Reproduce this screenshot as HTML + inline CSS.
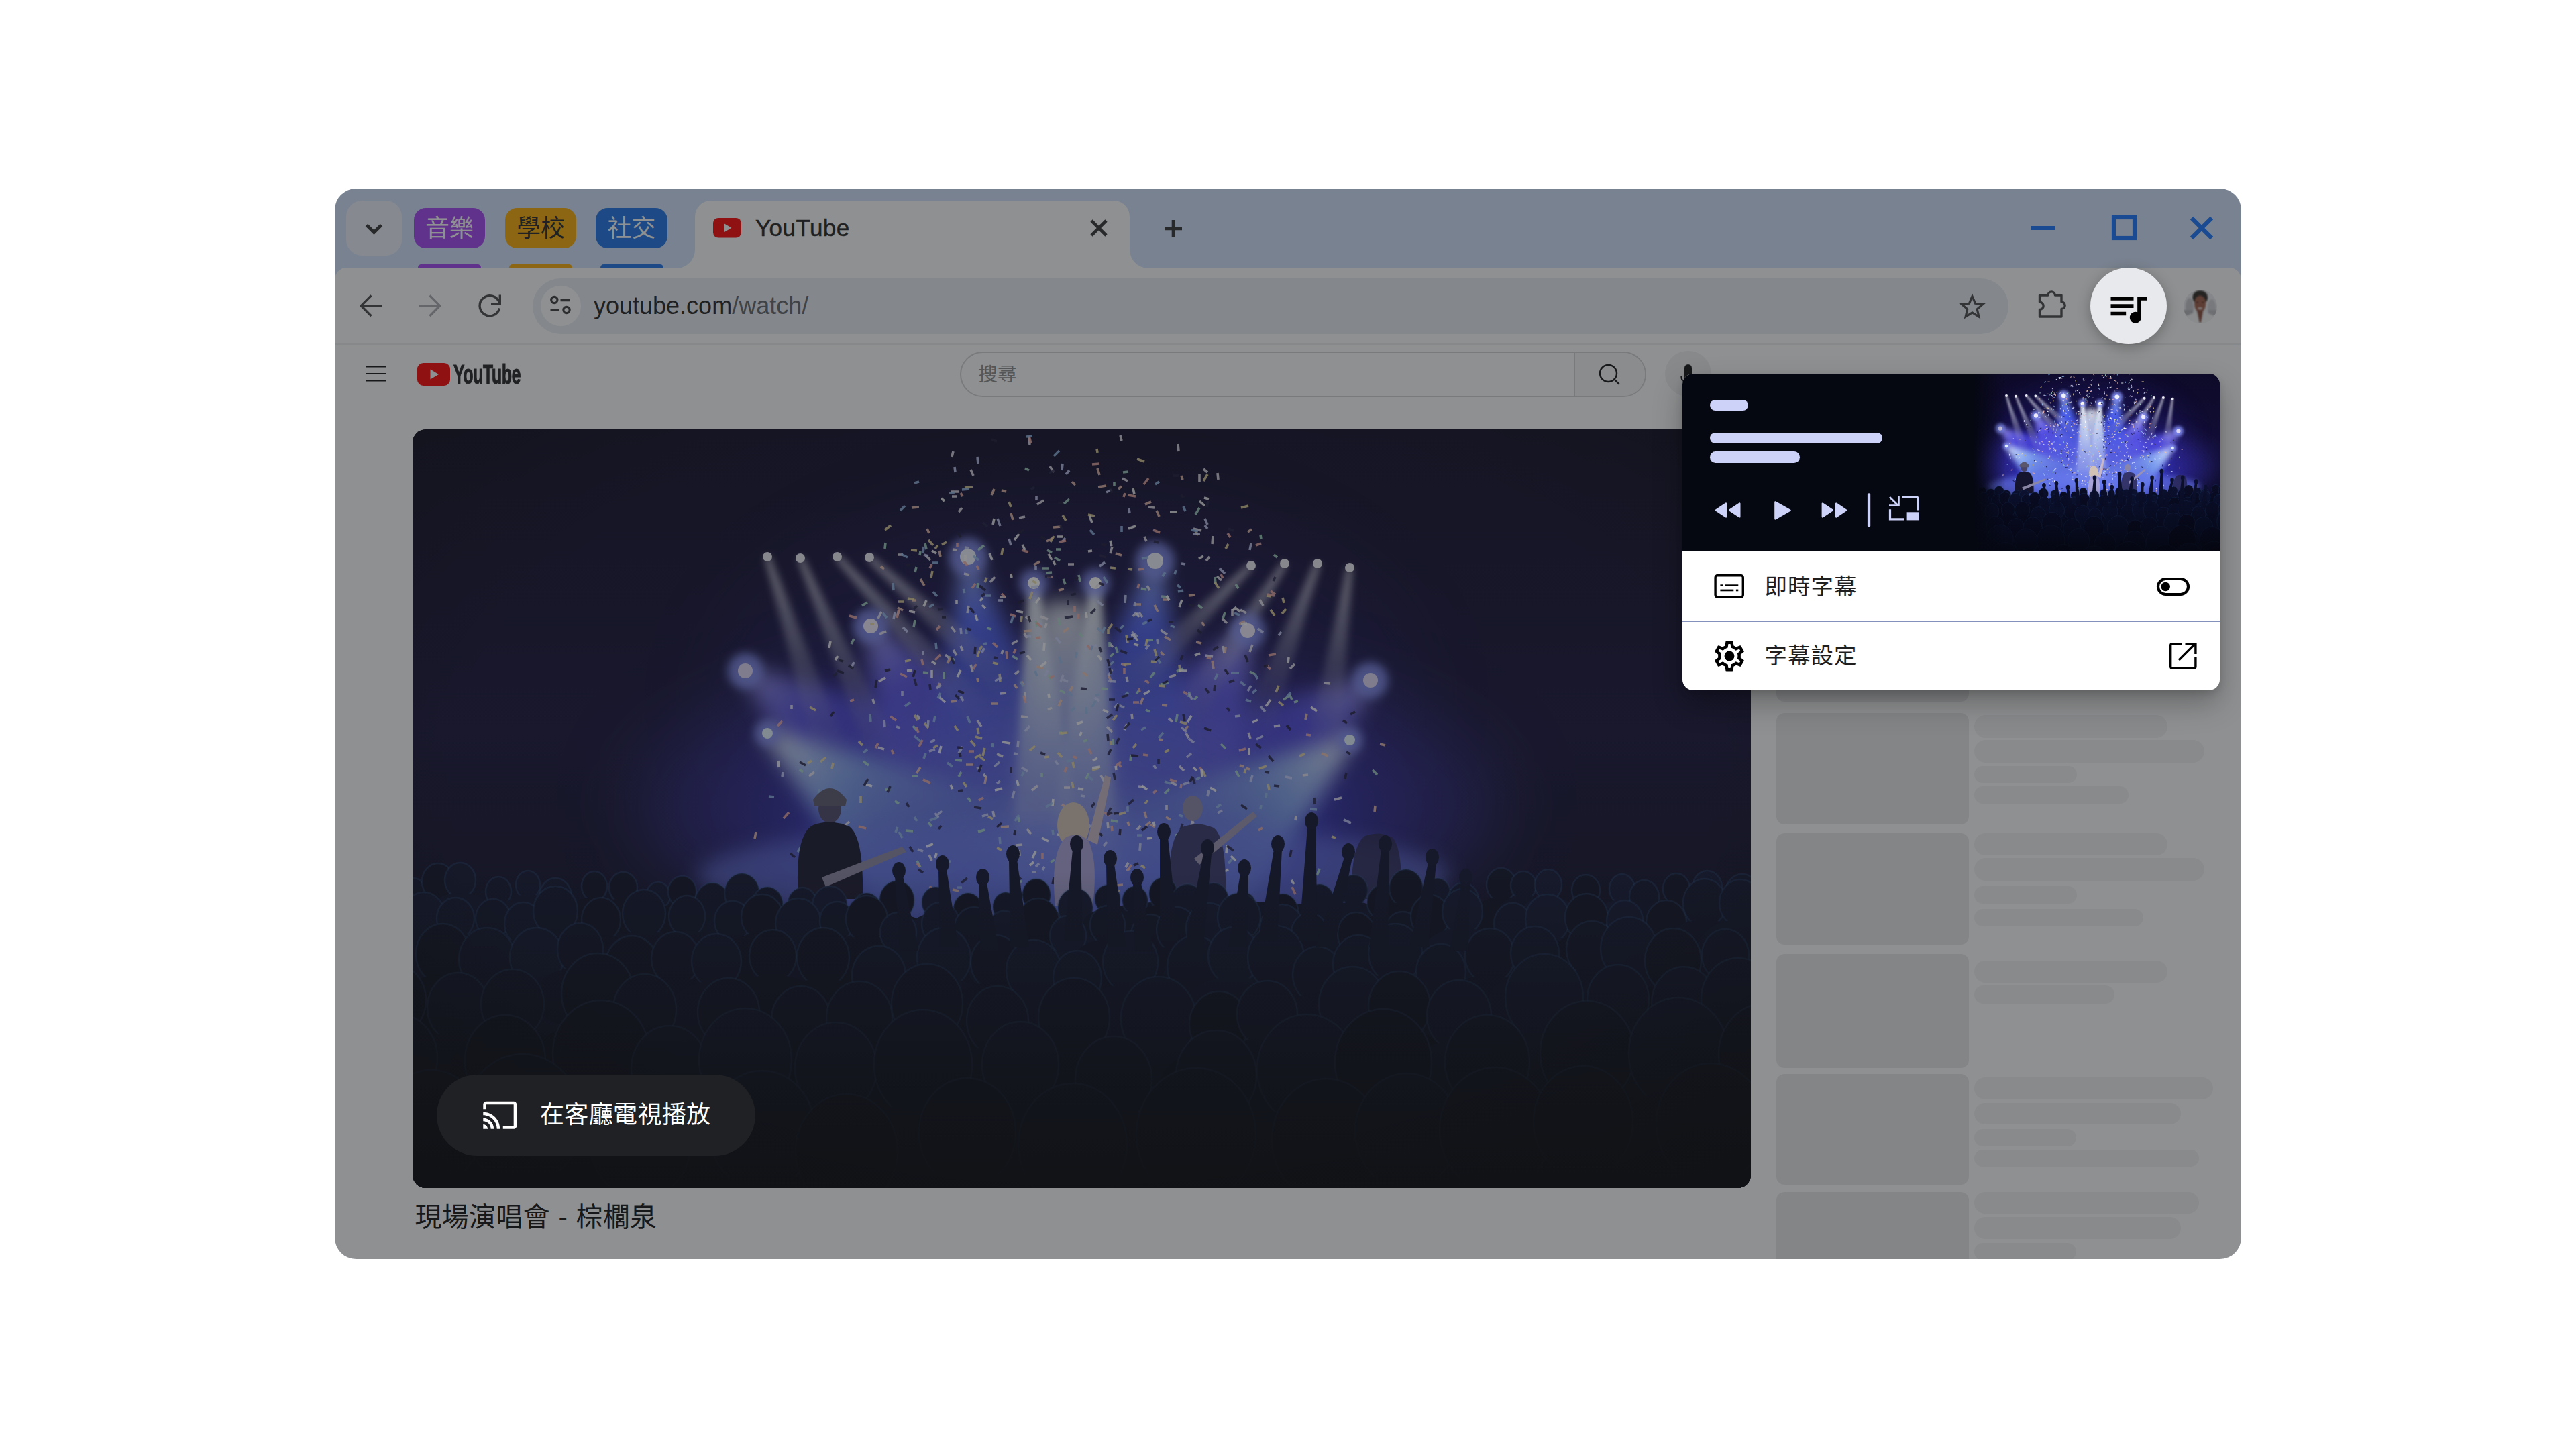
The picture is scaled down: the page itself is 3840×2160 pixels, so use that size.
<!DOCTYPE html><html lang="zh-Hant"><head><meta charset="utf-8"><title>YouTube</title><style>
*{box-sizing:border-box;margin:0;padding:0}
html,body{width:3840px;height:2160px;background:#fff;overflow:hidden}
body{position:relative;font-family:"Liberation Sans","Noto Sans CJK TC",sans-serif;color:#1f1f1f}
.abs{position:absolute}
#win{position:absolute;left:0;top:0;width:3840px;height:2160px;clip-path:inset(281px 499px 283px 499px round 32px);background:#d3e3fd}
#top{position:absolute;left:0;top:0;width:3840px;height:2160px;clip-path:inset(281px 499px 283px 499px round 32px)}
.chip{position:absolute;top:310px;height:60px;border-radius:18px;font-size:36px;line-height:62px;text-align:center;color:#fff;letter-spacing:0}
.uline{position:absolute;top:394.3px;height:14px;border-radius:5px}
#toolbar{position:absolute;left:499px;top:399px;width:2842px;height:114px;background:#fff;border-radius:18px 18px 0 0}
#tsep{position:absolute;left:499px;top:512px;width:2842px;height:2px;background:#eceef1}
#page{position:absolute;left:499px;top:515px;width:2842px;height:1362px;background:#fff}
#omni{position:absolute;left:794px;top:414.5px;width:2200px;height:83px;border-radius:42px;background:#e9eef6}
.sk{position:absolute;background:#e9e9ea;border-radius:12px}
.sl{position:absolute;background:#f2f2f3;border-radius:17px;left:2943px}
#scrim{position:absolute;left:499px;top:281px;width:2842px;height:1596px;background:rgba(32,33,36,.5)}
#video{position:absolute;left:615px;top:640px;width:1995px;height:1131px;border-radius:20px;overflow:hidden;background:#0d0a26}
#pop{position:absolute;left:2508px;top:557px;width:801px;height:472px;border-radius:16px;background:#fff;box-shadow:0 20px 44px rgba(0,0,0,.27),0 5px 12px rgba(0,0,0,.12)}
#popin{position:absolute;left:0;top:0;width:801px;height:472px;border-radius:16px;overflow:hidden}
#dark{position:absolute;left:0;top:0;width:801px;height:265px;background:#050711}
.pill{position:absolute;background:#cdd2f8;border-radius:9px}
.row{position:absolute;left:122.5px;letter-spacing:1px;font-size:33.5px;color:#1f1f1f;line-height:40px;white-space:nowrap}
#mbtn{position:absolute;left:3116px;top:399px;width:114px;height:114px;border-radius:57px;background:#e8e9ed;box-shadow:0 5px 20px rgba(0,0,0,.28)}
#cast{position:absolute;left:651px;top:1602px;width:475px;height:121px;border-radius:61px;background:#202125}
</style></head><body>
<svg width="0" height="0" style="position:absolute"><symbol id="concert" viewBox="0 0 1995 1131" preserveAspectRatio="none">
<defs>
<linearGradient id="cbg" x1="0" y1="0" x2="0" y2="1"><stop offset="0" stop-color="#0c0926"/><stop offset=".4" stop-color="#120e36"/><stop offset=".65" stop-color="#0c0c26"/><stop offset="1" stop-color="#020307"/></linearGradient>
<radialGradient id="cglow" cx="975" cy="590" r="1" gradientUnits="userSpaceOnUse" gradientTransform="translate(975 590) scale(640 330) translate(-975 -590)"><stop offset="0" stop-color="#6c7ef2" stop-opacity=".95"/><stop offset=".3" stop-color="#3c4ce8" stop-opacity=".88"/><stop offset=".6" stop-color="#3030c2" stop-opacity=".62"/><stop offset=".82" stop-color="#251c86" stop-opacity=".28"/><stop offset="1" stop-color="#140f50" stop-opacity="0"/></radialGradient>
<linearGradient id="bw" x1="0" y1="0" x2="0" y2="1"><stop offset="0" stop-color="#e4e4f0" stop-opacity=".8"/><stop offset=".6" stop-color="#b8b8d8" stop-opacity=".3"/><stop offset="1" stop-color="#9090c0" stop-opacity="0"/></linearGradient>
<linearGradient id="bb" x1="0" y1="0" x2="0" y2="1"><stop offset="0" stop-color="#9ab4ff"/><stop offset=".25" stop-color="#4a62ff" stop-opacity=".9"/><stop offset=".6" stop-color="#3342ea" stop-opacity=".6"/><stop offset="1" stop-color="#3038d0" stop-opacity="0"/></linearGradient>
<linearGradient id="bp" x1="0" y1="0" x2="0" y2="1"><stop offset="0" stop-color="#aaa6ff"/><stop offset=".25" stop-color="#5650f4" stop-opacity=".9"/><stop offset=".6" stop-color="#3f38dc" stop-opacity=".6"/><stop offset="1" stop-color="#3230c4" stop-opacity="0"/></linearGradient>
<linearGradient id="bc" x1="0" y1="0" x2="0" y2="1"><stop offset="0" stop-color="#eaf6ff"/><stop offset=".3" stop-color="#8cbcf8" stop-opacity=".85"/><stop offset=".65" stop-color="#5a80e6" stop-opacity=".5"/><stop offset="1" stop-color="#4868d8" stop-opacity="0"/></linearGradient>
<linearGradient id="bwc" x1="0" y1="0" x2="0" y2="1"><stop offset="0" stop-color="#f6fbff"/><stop offset=".35" stop-color="#d4e4f6" stop-opacity=".85"/><stop offset=".7" stop-color="#a8b8ee" stop-opacity=".45"/><stop offset="1" stop-color="#98a8f0" stop-opacity="0"/></linearGradient>
<linearGradient id="crowdfade" x1="0" y1="0" x2="0" y2="1"><stop offset="0" stop-color="#03040a" stop-opacity="0"/><stop offset=".3" stop-color="#03040a" stop-opacity=".3"/><stop offset=".65" stop-color="#03040a" stop-opacity=".7"/><stop offset="1" stop-color="#020308" stop-opacity=".94"/></linearGradient>
<radialGradient id="vig" cx=".5" cy=".45" r=".78"><stop offset=".6" stop-color="#000" stop-opacity="0"/><stop offset="1" stop-color="#000" stop-opacity=".5"/></radialGradient>
<filter id="bl8" x="-30%" y="-10%" width="160%" height="120%"><feGaussianBlur stdDeviation="6"/></filter>
<filter id="bl16" x="-30%" y="-10%" width="160%" height="130%"><feGaussianBlur stdDeviation="15"/></filter>
<filter id="bl24" x="-40%" y="-10%" width="180%" height="130%"><feGaussianBlur stdDeviation="26"/></filter>
<filter id="bl40" x="-30%" y="-30%" width="160%" height="160%"><feGaussianBlur stdDeviation="60"/></filter>
<filter id="bl5" x="-50%" y="-50%" width="200%" height="200%"><feGaussianBlur stdDeviation="7"/></filter>
</defs>
<rect width="1995" height="1131" fill="url(#cbg)"/>
<ellipse cx="975" cy="400" rx="520" ry="300" fill="#2a2496" opacity=".22" filter="url(#bl40)"/>
<ellipse cx="975" cy="560" rx="640" ry="210" fill="#3a34b4" opacity=".5" filter="url(#bl40)"/>
<rect width="1995" height="1131" fill="url(#cglow)"/>
<polygon points="-8.0,0 8.0,0 190.0,459.2 -190.0,459.2" fill="url(#bp)" opacity="0.85" filter="url(#bl16)" transform="translate(496 360) rotate(-52.43)"/>
<polygon points="-8.0,0 8.0,0 190.0,436.4 -190.0,436.4" fill="url(#bp)" opacity="0.85" filter="url(#bl16)" transform="translate(1428 374) rotate(50.77)"/>
<polygon points="-8.0,0 8.0,0 170.0,399.0 -170.0,399.0" fill="url(#bp)" opacity="0.95" filter="url(#bl16)" transform="translate(683 293) rotate(-29.58)"/>
<polygon points="-8.0,0 8.0,0 170.0,387.1 -170.0,387.1" fill="url(#bp)" opacity="0.95" filter="url(#bl16)" transform="translate(1245 300) rotate(28.55)"/>
<polygon points="-8.0,0 8.0,0 130.0,413.3 -130.0,413.3" fill="url(#bb)" opacity="1" filter="url(#bl16)" transform="translate(828 190) rotate(-7.23)"/>
<polygon points="-8.0,0 8.0,0 130.0,407.3 -130.0,407.3" fill="url(#bb)" opacity="1" filter="url(#bl16)" transform="translate(1107 196) rotate(7.33)"/>
<polygon points="-8.0,0 8.0,0 170.0,457.1 -170.0,457.1" fill="url(#bc)" opacity="0.9" filter="url(#bl16)" transform="translate(529 453) rotate(-54.26)"/>
<polygon points="-8.0,0 8.0,0 170.0,445.8 -170.0,445.8" fill="url(#bc)" opacity="0.9" filter="url(#bl16)" transform="translate(1397 463) rotate(53.21)"/>
<polygon points="-8.0,0 8.0,0 60.0,471.6 -60.0,471.6" fill="url(#bwc)" opacity="0.9" filter="url(#bl8)" transform="translate(926 229) rotate(-2.92)"/>
<polygon points="-8.0,0 8.0,0 60.0,471.5 -60.0,471.5" fill="url(#bwc)" opacity="0.9" filter="url(#bl8)" transform="translate(1018 229) rotate(2.67)"/>
<polygon points="-35.0,0 35.0,0 95.0,432.0 -95.0,432.0" fill="url(#bwc)" opacity="0.85" filter="url(#bl16)" transform="translate(972 258) rotate(-0.27)"/>
<ellipse cx="975" cy="540" rx="300" ry="190" fill="#8d9ae6" opacity=".36" filter="url(#bl40)"/>
<polygon points="-4.0,0 4.0,0 25.0,326.0 -25.0,326.0" fill="url(#bw)" opacity="0.95" filter="url(#bl8)" transform="translate(529 190) rotate(-18.05)"/>
<polygon points="-4.0,0 4.0,0 25.0,335.1 -25.0,335.1" fill="url(#bw)" opacity="0.95" filter="url(#bl8)" transform="translate(578 192) rotate(-23.20)"/>
<polygon points="-4.0,0 4.0,0 25.0,337.7 -25.0,337.7" fill="url(#bw)" opacity="0.95" filter="url(#bl8)" transform="translate(633 190) rotate(-42.24)"/>
<polygon points="-4.0,0 4.0,0 25.0,297.3 -25.0,297.3" fill="url(#bw)" opacity="0.95" filter="url(#bl8)" transform="translate(681 191) rotate(-47.45)"/>
<polygon points="-4.0,0 4.0,0 25.0,276.9 -25.0,276.9" fill="url(#bw)" opacity="0.95" filter="url(#bl8)" transform="translate(1397 206) rotate(8.31)"/>
<polygon points="-4.0,0 4.0,0 25.0,268.6 -25.0,268.6" fill="url(#bw)" opacity="0.95" filter="url(#bl8)" transform="translate(1349 200) rotate(20.26)"/>
<polygon points="-4.0,0 4.0,0 25.0,276.3 -25.0,276.3" fill="url(#bw)" opacity="0.95" filter="url(#bl8)" transform="translate(1300 200) rotate(32.88)"/>
<polygon points="-4.0,0 4.0,0 25.0,268.0 -25.0,268.0" fill="url(#bw)" opacity="0.95" filter="url(#bl8)" transform="translate(1250 203) rotate(45.15)"/>
<ellipse cx="985" cy="665" rx="560" ry="80" fill="#6a7cf0" opacity=".6" filter="url(#bl16)"/>
<circle cx="529" cy="190" r="7" fill="#ececf4"/>
<circle cx="578" cy="192" r="7" fill="#ececf4"/>
<circle cx="633" cy="190" r="7" fill="#ececf4"/>
<circle cx="681" cy="191" r="7" fill="#ececf4"/>
<circle cx="1250" cy="203" r="7" fill="#ececf4"/>
<circle cx="1300" cy="200" r="7" fill="#ececf4"/>
<circle cx="1349" cy="200" r="7" fill="#ececf4"/>
<circle cx="1397" cy="206" r="7" fill="#ececf4"/>
<circle cx="828" cy="190" r="28.799999999999997" fill="#8794ff" opacity=".8" filter="url(#bl5)"/>
<circle cx="828" cy="190" r="12" fill="#eef2ff"/>
<circle cx="1107" cy="196" r="28.799999999999997" fill="#8794ff" opacity=".8" filter="url(#bl5)"/>
<circle cx="1107" cy="196" r="12" fill="#eef2ff"/>
<circle cx="926" cy="229" r="21.599999999999998" fill="#8794ff" opacity=".8" filter="url(#bl5)"/>
<circle cx="926" cy="229" r="9" fill="#fff"/>
<circle cx="1018" cy="229" r="21.599999999999998" fill="#8794ff" opacity=".8" filter="url(#bl5)"/>
<circle cx="1018" cy="229" r="9" fill="#fff"/>
<circle cx="683" cy="293" r="26.4" fill="#8794ff" opacity=".8" filter="url(#bl5)"/>
<circle cx="683" cy="293" r="11" fill="#f0ecff"/>
<circle cx="1245" cy="300" r="26.4" fill="#8794ff" opacity=".8" filter="url(#bl5)"/>
<circle cx="1245" cy="300" r="11" fill="#f0ecff"/>
<circle cx="496" cy="360" r="26.4" fill="#8794ff" opacity=".8" filter="url(#bl5)"/>
<circle cx="496" cy="360" r="11" fill="#dcd6f6"/>
<circle cx="1428" cy="374" r="26.4" fill="#8794ff" opacity=".8" filter="url(#bl5)"/>
<circle cx="1428" cy="374" r="11" fill="#dcd6f6"/>
<circle cx="529" cy="453" r="19.2" fill="#8794ff" opacity=".8" filter="url(#bl5)"/>
<circle cx="529" cy="453" r="8" fill="#e2f0ff"/>
<circle cx="1397" cy="463" r="19.2" fill="#8794ff" opacity=".8" filter="url(#bl5)"/>
<circle cx="1397" cy="463" r="8" fill="#e2f0ff"/>
<path d="M804 100l7 0M1179 59l6 5M1026 516l5 9M837 713l6 3M1173 66l0 12M1079 273l-5 6M1138 366l-10 3M865 569l2 9M1315 350l-7 7M975 573l5 4M1124 560l0 7M819 117l-5 6M941 106l-10 6M805 179l7 1M1064 369l2 7M699 272l-5 10M1263 254l5 9M1002 637l9 6M806 33l-2 8M806 329l5 8M950 55l6 9M817 323l3 7M1317 576l-1 7M1083 273l5 7M1095 233l4 7M1162 586l-2 10M1143 502l7 7M1035 443l8 8M651 585l-8 7M1207 282l7 7M794 336l8 7M1036 586l1 9M1246 452l3 9M1293 441l-9 2M752 426l4 6M1199 219l7 6M936 279l11 4M1182 337l11 2M832 351l3 10M565 411l0 6M885 393l-9 1M1091 160l3 7M851 514l5 6M706 301l-10 4M1164 148l12 3M1335 515l-8 1M868 220l-7 8M1040 320l4 5M1161 580l3 8M1130 526l9 4M907 428l10 1M1115 299l10 7M902 315l-9 5M832 60l4 9M822 215l8 2M916 596l6 7M1097 116l9 1M880 329l-2 6M694 474l9 3M1141 22l1 11M1058 73l8 4M1127 431l6 5M1252 321l-4 11M1222 268l0 11M1234 269l9 5M1358 378l10 1M909 619l-10 1M912 304l4 7M1193 159l-1 12M1385 549l-11 3M871 484l9 4M953 415l-6 3M1208 323l2 11M875 250l9 0M914 279l9 7M1085 591l-5 6M1067 646l-4 7M599 511l-8 6M932 531l-9 7M945 289l-2 7M1153 453l4 7M686 402l2 7M1082 532l8 1M904 360l-6 5M1055 9l2 8M803 93l11 0M1043 175l-3 10M977 201l9 0M1072 424l1 8M913 130l-9 2M842 434l6 9M913 392l0 11M829 263l-2 11M1188 190l-5 6M919 12l1 11M971 534l9 0M731 187l-8 0M803 294l6 8M765 188l7 7M1023 231l-5 5M770 634l4 9M1200 65l1 10" stroke="#eeebf5" stroke-width="3.6" opacity=".85" fill="none"/>
<path d="M1113 462l6 1M1241 286l-9 4M908 376l3 6M984 383l-4 7M755 116l-11 1M842 371l1 6M930 354l11 2M786 378l-3 7M723 266l8 4M1091 570l3 10M1034 84l-12 2M867 89l-4 9M1089 400l-4 10M1156 442l-6 8M872 409l-10 0M1166 247l-9 1M1146 69l2 6M751 255l-6 0M1066 585l2 6M889 592l-12 1M1106 262l5 10M955 162l-10 5M897 380l4 6M1121 309l9 5M1435 561l-1 9M1031 548l-1 7M805 686l9 2M1059 679l-10 1M1115 332l5 5M983 78l5 5M1212 324l-1 10M1177 287l3 6M892 125l3 10M891 677l7 7M757 223l6 10M1333 424l-2 9M1057 85l-5 4M836 500l-11 0M1117 411l8 1M1086 261l-9 0M1168 317l8 2M1128 254l-9 0M1251 149l-6 4M1071 683l5 9M967 403l-4 10M698 204l5 4M1037 366l5 11M1100 585l-7 6M968 559l8 6M1056 350l8 2M1109 121l4 9M978 296l-8 6M1233 501l6 2M1021 58l3 10M1000 362l6 6M1242 505l6 2M935 197l-9 5M1442 469l8 2M767 148l3 7M1123 578l7 4M1048 185l9 3M1192 345l2 12M878 91l7 2M512 600l-2 10M729 697l-7 1M811 405l-8 1M785 181l2 9M1099 589l8 4M1044 640l3 9M1355 483l10 4M967 145l-12 1M971 716l-6 2M1101 108l-9 4M757 504l-6 9M971 238l-8 2M923 300l-12 1M855 518l-2 10" stroke="#f4c6b2" stroke-width="3.6" opacity=".85" fill="none"/>
<path d="M658 312l-4 8M1011 693l-6 4M994 304l5 5M1211 273l-3 9M1352 655l-4 10M853 597l-10 3M913 58l6 3M843 229l-1 8M719 554l6 4M1127 378l-12 2M957 642l-6 3M1086 237l8 2M946 180l7 4M1306 398l-8 5M1039 317l-0 7M678 258l-8 5M1158 608l-2 9M965 389l8 4M769 586l5 6M948 366l4 7M1307 395l4 8M712 537l-7 0M908 674l-7 0M1138 603l3 6M751 205l-2 8M959 179l7 0M938 512l0 7M894 338l8 5M1044 462l0 8M1227 231l4 6M957 191l8 5M787 641l2 6M1083 389l-4 5M1140 425l-2 12M1264 157l1 7M1048 324l3 9M953 213l-9 1M1284 187l5 4M735 598l11 1M577 655l3 8M1128 536l-7 7M1041 583l10 2M818 511l-4 7M828 549l4 6M1093 418l6 3M746 442l6 7M1029 700l10 3M903 578l1 8M745 517l8 0M761 362l8 1M1027 386l9 1M1149 357l-10 4M1008 513l-4 8M1196 220l1 10M1067 63l-8 1M1556 708l6 1M1173 117l-6 10M1248 361l8 4M1046 78l0 7M1006 463l-6 2M764 170l2 9M1104 314l-11 1M970 223l3 8M792 361l-0 11M1170 398l-5 5M809 493l10 1M938 207l10 0M1045 334l-5 5M993 217l2 10M757 182l-1 6M852 173l-9 7M856 296l7 2M1162 550l7 6M963 281l2 11M752 643l5 10M705 169l-1 9M965 450l5 5M1171 262l6 5M1227 509l5 9M637 705l-7 5M648 628l8 8M672 495l8 6M799 339l9 5M1205 469l7 7M577 507l5 4M1158 391l-1 8M1116 249l11 1M1071 485l-1 9M979 104l-8 7M929 285l2 9M749 284l-2 11M1320 405l-6 2M1431 508l7 7M801 341l-4 8M1111 599l8 3M1343 583l6 6M1106 362l-6 8" stroke="#aadcc8" stroke-width="3.6" opacity=".85" fill="none"/>
<path d="M1143 351l1 11M1242 506l-2 7M1273 502l-11 4M1291 406l7 6M1063 571l-10 3M962 482l6 7M796 168l-7 4M1066 208l7 1M738 252l10 2M984 496l2 9M1007 127l10 2M880 177l-2 10M665 465l6 6M1370 607l6 2M1196 228l6 9M987 558l3 7M1302 268l-6 7M1144 436l10 3M1279 269l6 9M1050 426l-6 8M924 242l-4 11M616 489l-8 7M1041 464l0 6M1112 382l10 1M1079 469l-5 6M858 577l7 4M1155 632l7 2M1216 171l-4 7M783 471l-7 4M1037 297l-0 8M1106 328l3 10M1101 346l8 1M847 485l-9 5M924 226l6 3M743 180l9 1M835 86l-12 1M832 464l7 8M846 488l7 6M983 525l2 10M1064 307l2 11M1071 350l-11 1M743 344l-9 2M1297 251l2 8M956 159l-5 9M1128 478l-7 3M599 623l-6 5M821 526l5 7M854 707l1 9M871 624l7 3M889 108l3 8M627 497l-2 9M1185 67l-6 10M1086 650l6 4M856 221l-3 7M808 442l5 7M713 143l-9 7M660 690l7 0M1233 651l7 1M928 472l-8 7M592 414l9 5M688 290l-6 0M1167 153l4 5M976 452l-12 1M1330 484l-8 3M839 458l10 3M595 494l-6 4M1040 206l8 1M1273 248l7 1M845 330l-3 9M769 165l7 8M1291 382l-4 10M1275 528l2 10M763 438l6 7M875 364l1 12M842 445l2 9M775 211l-2 10M748 426l5 8M724 257l8 0M1246 114l-11 3M1096 553l-4 5M1024 505l-11 3M908 279l-1 8M853 475l-3 12M1043 688l11 0M1080 44l11 4M1095 313l-2 10M1020 29l1 6M865 348l8 2M849 323l-4 6M783 173l-4 5M1178 509l4 9M1043 290l-5 7M969 128l5 8M668 547l-0 10M949 488l-7 1" stroke="#ecdb9e" stroke-width="3.6" opacity=".85" fill="none"/>
<path d="M703 433l1 11M671 703l-6 10M1181 133l4 9M1037 375l11 1M1158 526l-9 3M1035 615l-5 6M1260 297l8 6M852 326l-3 7M753 626l8 3M1085 617l-1 11M820 473l-6 10M1174 156l-10 0M1072 302l9 7M1161 483l-7 6M1199 665l-2 11M779 477l-9 3M930 660l-7 0M1146 444l8 7M1042 90l-8 4M1105 501l3 5M938 288l-5 7M789 569l-9 8M1052 409l-6 6M1157 461l8 6M872 133l4 11M1063 247l-1 12M858 574l-9 3M779 572l5 7M1021 256l8 7M1011 590l-5 6M1250 382l-5 8M1043 358l-6 9M876 524l-5 4M1187 538l-2 9M1158 394l4 9M897 539l-3 11M761 331l0 6M1032 198l-8 6M731 295l7 7M996 546l6 1M1098 321l-5 7M878 370l-10 5M1268 457l-10 5M979 61l-5 6M788 381l-7 5M808 56l1 8M842 41l1 10M908 504l9 6M930 99l0 6M1146 200l6 1M872 255l8 0M933 234l-11 1M1017 400l7 5M920 442l-7 8M1070 655l-6 2M1169 563l-11 5M1295 302l-4 5M896 483l6 1M721 443l6 2M1234 427l-8 1M1301 518l10 2M1068 118l1 7M947 359l-4 9M970 366l-4 10M875 496l-8 7M915 308l7 1M929 203l0 7M942 652l-3 5M1053 411l8 4M1181 143l4 5M1077 258l-1 6M719 273l-2 10M969 51l-1 10M552 511l-1 7M769 434l-1 9M762 187l7 2M817 296l1 9M973 162l-4 5M934 647l-5 5M1388 582l11 5M1252 516l-3 9M1110 313l1 7M1207 568l-7 4M967 372l10 4M817 398l4 7M959 310l7 9M823 176l7 1M1264 413l7 8M1020 322l-10 2M658 347l-4 9M889 163l3 10M903 464l-1 10M848 504l-7 2M730 390l-0 7M779 463l-7 3M958 494l4 6M1250 170l-2 10M725 269l-2 8M1203 207l8 8M982 581l2 11" stroke="#cdd4ff" stroke-width="3.6" opacity=".85" fill="none"/>
<path d="M1242 476l-10 3M1265 170l-8 3M665 592l11 3M779 683l6 3M1104 150l10 4M725 269l-3 12M899 328l-3 6M908 180l10 3M919 10l3 11M1092 374l6 4M911 397l3 11M829 480l8 0M817 95l3 5M878 245l5 5M1056 496l-8 6M1215 155l4 6M840 350l-4 8M1039 635l9 1M1042 591l1 8M865 318l7 7M1273 352l6 6M711 727l-5 6M1332 455l7 1M1030 571l9 5M1066 98l12 2M712 428l9 6M1072 649l-7 9M1279 241l7 5M1129 522l10 3M956 367l-6 4M1052 497l4 7M771 681l5 6M812 169l0 7M993 275l-1 7M635 680l-9 7M974 166l-10 2M939 631l0 9M752 647l4 5M985 488l6 2M851 549l-7 4M787 336l-8 8M551 435l-7 7M761 522l11 5M930 288l8 7M1083 386l1 6M1024 51l-11 1M1287 335l-11 2M1205 216l3 6M751 444l3 8M1274 246l11 2M1184 340l6 2M802 340l-4 8M975 504l-3 7M839 230l-5 7M786 293l-5 6M1061 356l0 8M1089 485l7 1M1109 538l-5 4M987 264l0 9M651 278l11 3M774 201l-3 6M694 468l-4 7M955 220l-9 0M1062 95l-2 6M760 463l-5 10M1267 594l-6 4M1008 476l4 8M658 403l-6 2M886 332l-0 11M1083 230l-2 7M1097 73l-7 9M1146 529l-1 6M885 331l1 8M1149 391l6 4M1173 504l5 5M936 310l-7 1M714 478l3 6M1311 682l5 11M1090 208l-8 1M841 203l3 6M822 197l5 6M1083 407l-9 0M1006 322l5 6M626 644l-7 10M985 641l-6 6M727 364l10 5M891 276l8 3M759 343l2 9M561 571l-8 9" stroke="#f2ada4" stroke-width="3.6" opacity=".85" fill="none"/>
<path d="M1048 502l1 6M1009 129l4 10M1164 504l5 5M1151 663l5 4M776 618l-10 4M811 254l0 7M955 551l-1 10M1226 266l8 6M1116 190l1 6M942 318l-1 12M1173 107l8 7M1077 306l-6 1M945 347l-9 7M824 187l-0 10M1078 144l-11 4M802 530l3 6M1220 636l7 7M849 262l5 5M892 215l1 6M1216 656l-5 3M1214 620l-1 12M992 535l8 2M916 337l6 7M879 466l12 2M1179 189l-7 4M1176 507l1 11M948 186l5 9M766 255l-4 9M1143 360l12 0M839 277l3 8M970 160l-10 0M817 359l-5 10M1247 475l0 11M781 632l-2 7M1124 248l4 7M904 156l-7 9M938 609l10 5M1013 181l-6 1M1279 403l-7 10M1075 320l7 2M1160 668l7 0M785 399l9 8M774 346l6 4M900 271l10 2M1147 254l-4 11M961 604l10 1M1087 531l8 6M1029 418l8 4M623 316l-2 10M1218 696l10 6M948 394l1 6M774 359l-0 11M867 133l-2 9M1025 503l-12 2M1099 390l-9 5M935 251l-6 8M745 359l-8 1M1065 439l-4 9M1174 334l-8 3M788 103l5 4M926 645l-6 5M955 196l3 6M904 627l1 9M634 338l-4 6M1306 340l-1 9M1103 609l-8 1M909 172l4 8M1027 730l8 7M1140 123l-11 0M901 523l2 8M1161 427l-6 10M1104 585l2 6M1228 265l-5 5M1180 102l7 2M1004 273l1 8M850 251l-4 5M1074 306l7 9M1021 490l-7 4M1079 274l4 6M1310 672l4 6M1260 433l-8 4M705 370l-10 6M1040 166l2 8M997 451l-2 6M545 494l1 10M1339 414l9 6M1244 289l-9 1M999 436l-9 3M774 181l7 4M1074 88l2 9M929 629l-5 10M676 529l9 3M1022 337l5 7M788 472l-3 11M860 185l4 10M1189 534l9 5M740 271l9 2M879 535l-11 3" stroke="#ffffff" stroke-width="3.6" opacity=".85" fill="none"/>
<path d="M1338 566l10 1M985 493l-10 2M1024 395l-6 2M1309 392l-6 7M755 78l-7 2M1149 115l3 7M954 597l1 7M1149 240l-8 2M1200 364l-4 9M987 415l-5 5M748 457l9 8M827 428l4 10M875 607l1 11M1057 144l-0 9M701 274l6 7M1113 78l-6 4M734 114l-7 7M531 547l8 1M619 539l-5 5M1045 346l-6 6M1007 517l7 6M978 392l5 5M1140 232l5 4M808 94l-8 1M1256 365l4 7M819 683l-7 0M836 189l8 6M728 186l10 5M1093 444l-7 4M606 536l1 8M906 376l5 7M725 600l5 9M1174 519l-6 3M1142 575l6 2M1220 363l12 0M964 339l3 10M928 360l3 8M723 593l-3 8M895 279l-3 10M762 175l-1 10M802 644l-12 1M780 318l1 10M1010 670l-1 8M1095 287l-7 3M1225 274l8 3M682 425l1 11M1273 542l-1 8M1030 220l6 9M1258 388l-6 5M1122 213l-4 6M911 511l-3 6M678 477l-6 5M862 248l-8 0M1109 340l6 9M784 199l-9 0M748 578l4 6M1121 525l9 3M782 579l-11 4M1004 414l1 10M1060 292l-5 5M821 238l2 6M1130 292l6 3M904 575l-6 9M1032 294l-4 10M1222 640l-6 7M1242 403l8 3M765 483l-3 8M1021 296l5 5M830 89l-11 1M1205 559l-7 5M1080 605l7 0M776 242l6 7M990 332l-1 9M954 557l-10 6M825 298l1 7M579 622l-5 8M1189 611l-3 7M856 319l-6 1M1161 150l10 2M1018 405l-5 9M964 32l-8 8M742 407l-8 6M1138 210l-2 6M1067 392l-5 4M1234 376l7 6M777 261l-7 4M924 10l-9 1M1066 562l0 8M865 468l-1 6M1014 323l-3 6M1097 191l-10 2M787 393l-4 8M779 427l-2 10M797 497l8 6M1265 560l-1 6M1119 452l-7 8M716 229l1 11M1010 150l6 7" stroke="#93bbea" stroke-width="3.6" opacity=".85" fill="none"/>
<path d="M1095 592l-8 6M1276 487l7 8M845 233l9 7M635 344l7 2M1053 572l-8 1M1235 560l9 6M1223 697l4 7M628 421l-5 7M1145 98l5 4M1082 647l-7 3M1174 634l-9 7M1113 339l-6 6M848 500l-4 11M918 279l3 8M815 482l2 6M763 223l6 6M1022 600l6 6M577 496l9 5M1023 229l8 3M1036 454l1 10M742 201l-6 2M1143 69l-10 0M898 598l-1 7M878 587l-7 6M1310 627l-2 10M692 373l-2 12M1074 312l-9 1M1036 343l3 10M650 352l7 5M813 154l4 7M1149 425l2 10M1038 403l9 0M1392 512l-2 9M1387 434l6 4M1122 678l-6 3M1392 481l6 3M789 280l6 0M894 719l1 10M959 647l-0 9M863 15l8 3M1052 410l-3 10M1275 352l-6 2M813 390l9 3M936 160l8 4M1163 518l-4 7M1241 336l4 11M1170 299l6 5M913 332l-8 2M1163 660l9 7M1167 576l1 6M831 266l6 8M1303 441l6 7M1126 375l-8 4M633 360l10 3M992 220l-4 5M1405 421l-7 4M1040 88l3 7M1055 596l-1 9M1180 445l10 4M911 150l-8 5M1041 477l-4 8M1211 358l5 7M1039 356l2 8M712 358l-8 2M1392 722l-11 3M1071 486l11 1M749 359l-3 10M969 109l-7 1M911 255l-9 4M809 396l6 6M839 324l-1 11M956 668l-2 10M1026 171l8 2M563 632l7 6" stroke="#1a1838" stroke-width="3.6" opacity=".85" fill="none"/>
<path d="M752 263l-5 5M1041 564l-5 10M1216 148l8 3M957 61l-8 4M788 591l-4 5M1018 268l-7 7M984 279l-12 2M1158 682l7 9M1067 396l-10 3M820 538l-7 1M1163 519l3 9M812 474l9 1M1024 325l3 7M866 340l6 1M748 372l3 10M1186 107l-2 9M966 143l2 8M1196 381l-1 9M1214 415l4 5M771 380l1 8M810 721l-5 10M1043 571l-8 4M633 363l-6 5M959 705l7 7M790 268l-7 1M1214 621l10 7M1286 220l-3 6M892 504l0 9M712 532l-4 9M1148 337l-3 7M1017 557l-5 6M1075 552l-8 7M1069 438l-8 8M827 669l-9 7M736 557l4 6M1157 261l8 3M654 734l-3 11M1182 386l5 7M1105 167l7 2M679 521l-6 10M1148 588l-3 9M803 339l4 11M927 86l-5 4M754 656l7 5M1284 531l8 1M1344 549l1 10M1112 492l0 7M1127 287l7 0M853 245l-5 4M952 219l-9 0M1270 511l7 1M1045 512l2 10M1024 188l10 3M902 666l5 5M936 482l7 3M741 622l5 8M996 386l9 1M1055 330l10 4M826 297l7 2M1043 425l-8 6M1201 324l-8 5M837 563l11 2M1257 469l8 6M977 254l0 8M1053 460l-4 9M1047 295l9 7M989 245l-8 2M850 139l7 6M1225 374l-8 3M1102 283l-6 3" stroke="#201d44" stroke-width="3.6" opacity=".85" fill="none"/>
<g>
<ellipse cx="622" cy="566" rx="17" ry="21" fill="#4a4468"/>
<path d="M597 552 q25 -34 50 0 l-2 10 h-46z" fill="#5a566e"/>
<path d="M575 700 q-6 -96 22 -110 q26 -10 54 2 q22 16 20 108z" fill="#15142e"/>
<path d="M610 668 l120 -46 6 8 -120 52z" fill="#8a86a6"/>
<ellipse cx="1163" cy="565" rx="15" ry="19" fill="#8a86aa"/>
<path d="M1128 700 q-4 -94 22 -108 q22 -8 44 2 q20 14 18 106z" fill="#34346a"/>
<path d="M1165 640 l88 -70 6 7 -86 72z" fill="#9a92b4"/>
<ellipse cx="985" cy="590" rx="24" ry="34" fill="#d2c2b6"/>
<path d="M958 710 q-8 -80 16 -102 q20 -10 34 6 q14 30 6 96z" fill="#a8a2d8"/>
<path d="M1006 612 l26 -96 9 3 -20 100z" fill="#c8b8c8"/>
<path d="M1400 700 q-2 -80 20 -94 q20 -8 40 2 q16 14 14 92z" fill="#24224a" opacity=".8"/>
</g>
<g><path d="M0 690 Q300 670 600 716 T1000 724 T1400 714 T1995 680 V1131 H0z" fill="#0a0e2a"/><ellipse cx="1" cy="690" rx="19" ry="21" fill="#0a0e2a" stroke="#2a5a96" stroke-opacity=".3" stroke-width="2.5"/><ellipse cx="1" cy="730" rx="38" ry="25" fill="#0a0e2a"/><ellipse cx="38" cy="674" rx="24" ry="27" fill="#090c24" stroke="#2a5a96" stroke-opacity=".3" stroke-width="2.5"/><ellipse cx="38" cy="724" rx="48" ry="31" fill="#090c24"/><ellipse cx="71" cy="672" rx="23" ry="26" fill="#0b102e" stroke="#2a5a96" stroke-opacity=".3" stroke-width="2.5"/><ellipse cx="71" cy="721" rx="47" ry="30" fill="#0b102e"/><ellipse cx="128" cy="689" rx="19" ry="22" fill="#0a0e2a" stroke="#2a5a96" stroke-opacity=".3" stroke-width="2.5"/><ellipse cx="128" cy="729" rx="39" ry="25" fill="#0a0e2a"/><ellipse cx="172" cy="679" rx="18" ry="21" fill="#0b102e" stroke="#2a5a96" stroke-opacity=".3" stroke-width="2.5"/><ellipse cx="172" cy="717" rx="37" ry="24" fill="#0b102e"/><ellipse cx="213" cy="696" rx="24" ry="27" fill="#0b102e" stroke="#2a5a96" stroke-opacity=".3" stroke-width="2.5"/><ellipse cx="213" cy="747" rx="48" ry="31" fill="#0b102e"/><ellipse cx="271" cy="681" rx="19" ry="22" fill="#090c24" stroke="#2a5a96" stroke-opacity=".3" stroke-width="2.5"/><ellipse cx="271" cy="722" rx="39" ry="25" fill="#090c24"/><ellipse cx="314" cy="683" rx="21" ry="23" fill="#090c24" stroke="#2a5a96" stroke-opacity=".3" stroke-width="2.5"/><ellipse cx="314" cy="726" rx="41" ry="27" fill="#090c24"/><ellipse cx="366" cy="695" rx="18" ry="20" fill="#0b102e" stroke="#2a5a96" stroke-opacity=".3" stroke-width="2.5"/><ellipse cx="366" cy="733" rx="36" ry="23" fill="#0b102e"/><ellipse cx="402" cy="689" rx="21" ry="23" fill="#090c24" stroke="#2a5a96" stroke-opacity=".3" stroke-width="2.5"/><ellipse cx="402" cy="732" rx="41" ry="27" fill="#090c24"/><ellipse cx="447" cy="705" rx="26" ry="29" fill="#0a0e2a" stroke="#2a5a96" stroke-opacity=".3" stroke-width="2.5"/><ellipse cx="447" cy="758" rx="51" ry="33" fill="#0a0e2a"/><ellipse cx="491" cy="691" rx="26" ry="29" fill="#0b102e" stroke="#2a5a96" stroke-opacity=".3" stroke-width="2.5"/><ellipse cx="491" cy="745" rx="52" ry="34" fill="#0b102e"/><ellipse cx="529" cy="708" rx="23" ry="26" fill="#0a0e2a" stroke="#2a5a96" stroke-opacity=".3" stroke-width="2.5"/><ellipse cx="529" cy="757" rx="46" ry="30" fill="#0a0e2a"/><ellipse cx="581" cy="708" rx="22" ry="25" fill="#0b102e" stroke="#2a5a96" stroke-opacity=".3" stroke-width="2.5"/><ellipse cx="581" cy="754" rx="44" ry="29" fill="#0b102e"/><ellipse cx="622" cy="710" rx="26" ry="29" fill="#0c1232" stroke="#2a5a96" stroke-opacity=".3" stroke-width="2.5"/><ellipse cx="622" cy="763" rx="51" ry="33" fill="#0c1232"/><ellipse cx="677" cy="716" rx="22" ry="25" fill="#0b102e" stroke="#2a5a96" stroke-opacity=".3" stroke-width="2.5"/><ellipse cx="677" cy="763" rx="45" ry="29" fill="#0b102e"/><ellipse cx="722" cy="702" rx="26" ry="29" fill="#090c24" stroke="#2a5a96" stroke-opacity=".3" stroke-width="2.5"/><ellipse cx="722" cy="756" rx="51" ry="33" fill="#090c24"/><ellipse cx="780" cy="705" rx="21" ry="23" fill="#0c1232" stroke="#2a5a96" stroke-opacity=".3" stroke-width="2.5"/><ellipse cx="780" cy="748" rx="41" ry="27" fill="#0c1232"/><ellipse cx="828" cy="716" rx="22" ry="25" fill="#090c24" stroke="#2a5a96" stroke-opacity=".3" stroke-width="2.5"/><ellipse cx="828" cy="763" rx="45" ry="29" fill="#090c24"/><ellipse cx="884" cy="712" rx="19" ry="22" fill="#0a0e2a" stroke="#2a5a96" stroke-opacity=".3" stroke-width="2.5"/><ellipse cx="884" cy="753" rx="39" ry="25" fill="#0a0e2a"/><ellipse cx="930" cy="694" rx="21" ry="24" fill="#090c24" stroke="#2a5a96" stroke-opacity=".3" stroke-width="2.5"/><ellipse cx="930" cy="738" rx="42" ry="28" fill="#090c24"/><ellipse cx="988" cy="713" rx="26" ry="29" fill="#0c1232" stroke="#2a5a96" stroke-opacity=".3" stroke-width="2.5"/><ellipse cx="988" cy="768" rx="52" ry="34" fill="#0c1232"/><ellipse cx="1036" cy="700" rx="19" ry="21" fill="#0a0e2a" stroke="#2a5a96" stroke-opacity=".3" stroke-width="2.5"/><ellipse cx="1036" cy="739" rx="37" ry="24" fill="#0a0e2a"/><ellipse cx="1077" cy="702" rx="19" ry="21" fill="#0a0e2a" stroke="#2a5a96" stroke-opacity=".3" stroke-width="2.5"/><ellipse cx="1077" cy="741" rx="37" ry="24" fill="#0a0e2a"/><ellipse cx="1119" cy="692" rx="21" ry="24" fill="#090c24" stroke="#2a5a96" stroke-opacity=".3" stroke-width="2.5"/><ellipse cx="1119" cy="736" rx="43" ry="28" fill="#090c24"/><ellipse cx="1155" cy="707" rx="26" ry="29" fill="#0b102e" stroke="#2a5a96" stroke-opacity=".3" stroke-width="2.5"/><ellipse cx="1155" cy="761" rx="51" ry="33" fill="#0b102e"/><ellipse cx="1194" cy="700" rx="22" ry="24" fill="#0c1232" stroke="#2a5a96" stroke-opacity=".3" stroke-width="2.5"/><ellipse cx="1194" cy="746" rx="43" ry="28" fill="#0c1232"/><ellipse cx="1239" cy="712" rx="19" ry="22" fill="#090c24" stroke="#2a5a96" stroke-opacity=".3" stroke-width="2.5"/><ellipse cx="1239" cy="753" rx="39" ry="25" fill="#090c24"/><ellipse cx="1297" cy="718" rx="23" ry="26" fill="#090c24" stroke="#2a5a96" stroke-opacity=".3" stroke-width="2.5"/><ellipse cx="1297" cy="766" rx="46" ry="30" fill="#090c24"/><ellipse cx="1352" cy="703" rx="22" ry="25" fill="#0b102e" stroke="#2a5a96" stroke-opacity=".3" stroke-width="2.5"/><ellipse cx="1352" cy="749" rx="45" ry="29" fill="#0b102e"/><ellipse cx="1403" cy="687" rx="21" ry="23" fill="#0b102e" stroke="#2a5a96" stroke-opacity=".3" stroke-width="2.5"/><ellipse cx="1403" cy="731" rx="42" ry="27" fill="#0b102e"/><ellipse cx="1448" cy="705" rx="25" ry="27" fill="#090c24" stroke="#2a5a96" stroke-opacity=".3" stroke-width="2.5"/><ellipse cx="1448" cy="756" rx="49" ry="32" fill="#090c24"/><ellipse cx="1481" cy="684" rx="25" ry="28" fill="#090c24" stroke="#2a5a96" stroke-opacity=".3" stroke-width="2.5"/><ellipse cx="1481" cy="736" rx="49" ry="32" fill="#090c24"/><ellipse cx="1528" cy="691" rx="19" ry="22" fill="#0b102e" stroke="#2a5a96" stroke-opacity=".3" stroke-width="2.5"/><ellipse cx="1528" cy="731" rx="39" ry="25" fill="#0b102e"/><ellipse cx="1566" cy="702" rx="23" ry="26" fill="#0b102e" stroke="#2a5a96" stroke-opacity=".3" stroke-width="2.5"/><ellipse cx="1566" cy="750" rx="46" ry="30" fill="#0b102e"/><ellipse cx="1623" cy="679" rx="22" ry="25" fill="#090c24" stroke="#2a5a96" stroke-opacity=".3" stroke-width="2.5"/><ellipse cx="1623" cy="726" rx="44" ry="29" fill="#090c24"/><ellipse cx="1656" cy="680" rx="19" ry="21" fill="#0a0e2a" stroke="#2a5a96" stroke-opacity=".3" stroke-width="2.5"/><ellipse cx="1656" cy="719" rx="37" ry="24" fill="#0a0e2a"/><ellipse cx="1693" cy="679" rx="20" ry="23" fill="#0c1232" stroke="#2a5a96" stroke-opacity=".3" stroke-width="2.5"/><ellipse cx="1693" cy="722" rx="41" ry="26" fill="#0c1232"/><ellipse cx="1749" cy="687" rx="21" ry="23" fill="#090c24" stroke="#2a5a96" stroke-opacity=".3" stroke-width="2.5"/><ellipse cx="1749" cy="731" rx="42" ry="27" fill="#090c24"/><ellipse cx="1803" cy="685" rx="19" ry="22" fill="#0c1232" stroke="#2a5a96" stroke-opacity=".3" stroke-width="2.5"/><ellipse cx="1803" cy="726" rx="39" ry="25" fill="#0c1232"/><ellipse cx="1836" cy="697" rx="22" ry="25" fill="#0a0e2a" stroke="#2a5a96" stroke-opacity=".3" stroke-width="2.5"/><ellipse cx="1836" cy="743" rx="44" ry="28" fill="#0a0e2a"/><ellipse cx="1884" cy="685" rx="20" ry="23" fill="#090c24" stroke="#2a5a96" stroke-opacity=".3" stroke-width="2.5"/><ellipse cx="1884" cy="728" rx="41" ry="27" fill="#090c24"/><ellipse cx="1930" cy="683" rx="22" ry="25" fill="#0c1232" stroke="#2a5a96" stroke-opacity=".3" stroke-width="2.5"/><ellipse cx="1930" cy="729" rx="44" ry="29" fill="#0c1232"/><ellipse cx="1982" cy="691" rx="25" ry="28" fill="#0b102e" stroke="#2a5a96" stroke-opacity=".3" stroke-width="2.5"/><ellipse cx="1982" cy="743" rx="50" ry="33" fill="#0b102e"/><ellipse cx="17" cy="725" rx="31" ry="35" fill="#0c1232" stroke="#2a5a96" stroke-opacity=".3" stroke-width="2.5"/><ellipse cx="17" cy="791" rx="63" ry="41" fill="#0c1232"/><ellipse cx="64" cy="729" rx="28" ry="31" fill="#0b102e" stroke="#2a5a96" stroke-opacity=".3" stroke-width="2.5"/><ellipse cx="64" cy="787" rx="55" ry="36" fill="#0b102e"/><ellipse cx="120" cy="729" rx="26" ry="29" fill="#0a0e2a" stroke="#2a5a96" stroke-opacity=".3" stroke-width="2.5"/><ellipse cx="120" cy="784" rx="52" ry="34" fill="#0a0e2a"/><ellipse cx="165" cy="737" rx="28" ry="32" fill="#0b102e" stroke="#2a5a96" stroke-opacity=".3" stroke-width="2.5"/><ellipse cx="165" cy="796" rx="56" ry="37" fill="#0b102e"/><ellipse cx="213" cy="718" rx="33" ry="37" fill="#0a0e2a" stroke="#2a5a96" stroke-opacity=".3" stroke-width="2.5"/><ellipse cx="213" cy="787" rx="65" ry="42" fill="#0a0e2a"/><ellipse cx="281" cy="731" rx="29" ry="33" fill="#090c24" stroke="#2a5a96" stroke-opacity=".3" stroke-width="2.5"/><ellipse cx="281" cy="792" rx="58" ry="38" fill="#090c24"/><ellipse cx="345" cy="722" rx="32" ry="36" fill="#0a0e2a" stroke="#2a5a96" stroke-opacity=".3" stroke-width="2.5"/><ellipse cx="345" cy="789" rx="63" ry="41" fill="#0a0e2a"/><ellipse cx="409" cy="726" rx="27" ry="31" fill="#0a0e2a" stroke="#2a5a96" stroke-opacity=".3" stroke-width="2.5"/><ellipse cx="409" cy="783" rx="55" ry="36" fill="#0a0e2a"/><ellipse cx="477" cy="733" rx="27" ry="30" fill="#0a0e2a" stroke="#2a5a96" stroke-opacity=".3" stroke-width="2.5"/><ellipse cx="477" cy="790" rx="54" ry="35" fill="#0a0e2a"/><ellipse cx="521" cy="727" rx="31" ry="34" fill="#090c24" stroke="#2a5a96" stroke-opacity=".3" stroke-width="2.5"/><ellipse cx="521" cy="791" rx="61" ry="40" fill="#090c24"/><ellipse cx="575" cy="737" rx="34" ry="38" fill="#0b102e" stroke="#2a5a96" stroke-opacity=".3" stroke-width="2.5"/><ellipse cx="575" cy="808" rx="68" ry="44" fill="#0b102e"/><ellipse cx="633" cy="733" rx="26" ry="29" fill="#0a0e2a" stroke="#2a5a96" stroke-opacity=".3" stroke-width="2.5"/><ellipse cx="633" cy="788" rx="53" ry="34" fill="#0a0e2a"/><ellipse cx="677" cy="730" rx="31" ry="35" fill="#090c24" stroke="#2a5a96" stroke-opacity=".3" stroke-width="2.5"/><ellipse cx="677" cy="795" rx="62" ry="40" fill="#090c24"/><ellipse cx="724" cy="750" rx="27" ry="30" fill="#0b102e" stroke="#2a5a96" stroke-opacity=".3" stroke-width="2.5"/><ellipse cx="724" cy="807" rx="54" ry="35" fill="#0b102e"/><ellipse cx="787" cy="737" rx="28" ry="32" fill="#0b102e" stroke="#2a5a96" stroke-opacity=".3" stroke-width="2.5"/><ellipse cx="787" cy="796" rx="57" ry="37" fill="#0b102e"/><ellipse cx="837" cy="746" rx="30" ry="34" fill="#0a0e2a" stroke="#2a5a96" stroke-opacity=".3" stroke-width="2.5"/><ellipse cx="837" cy="809" rx="61" ry="39" fill="#0a0e2a"/><ellipse cx="882" cy="748" rx="27" ry="30" fill="#0c1232" stroke="#2a5a96" stroke-opacity=".3" stroke-width="2.5"/><ellipse cx="882" cy="805" rx="54" ry="35" fill="#0c1232"/><ellipse cx="933" cy="734" rx="31" ry="35" fill="#090c24" stroke="#2a5a96" stroke-opacity=".3" stroke-width="2.5"/><ellipse cx="933" cy="799" rx="63" ry="41" fill="#090c24"/><ellipse cx="977" cy="755" rx="27" ry="30" fill="#0c1232" stroke="#2a5a96" stroke-opacity=".3" stroke-width="2.5"/><ellipse cx="977" cy="811" rx="53" ry="35" fill="#0c1232"/><ellipse cx="1036" cy="739" rx="26" ry="29" fill="#0a0e2a" stroke="#2a5a96" stroke-opacity=".3" stroke-width="2.5"/><ellipse cx="1036" cy="794" rx="52" ry="34" fill="#0a0e2a"/><ellipse cx="1099" cy="754" rx="28" ry="31" fill="#0a0e2a" stroke="#2a5a96" stroke-opacity=".3" stroke-width="2.5"/><ellipse cx="1099" cy="812" rx="55" ry="36" fill="#0a0e2a"/><ellipse cx="1139" cy="746" rx="30" ry="34" fill="#0a0e2a" stroke="#2a5a96" stroke-opacity=".3" stroke-width="2.5"/><ellipse cx="1139" cy="809" rx="60" ry="39" fill="#0a0e2a"/><ellipse cx="1187" cy="744" rx="34" ry="38" fill="#0c1232" stroke="#2a5a96" stroke-opacity=".3" stroke-width="2.5"/><ellipse cx="1187" cy="815" rx="68" ry="44" fill="#0c1232"/><ellipse cx="1232" cy="727" rx="32" ry="36" fill="#0b102e" stroke="#2a5a96" stroke-opacity=".3" stroke-width="2.5"/><ellipse cx="1232" cy="794" rx="64" ry="42" fill="#0b102e"/><ellipse cx="1296" cy="745" rx="33" ry="37" fill="#0c1232" stroke="#2a5a96" stroke-opacity=".3" stroke-width="2.5"/><ellipse cx="1296" cy="814" rx="65" ry="42" fill="#0c1232"/><ellipse cx="1337" cy="751" rx="27" ry="30" fill="#0a0e2a" stroke="#2a5a96" stroke-opacity=".3" stroke-width="2.5"/><ellipse cx="1337" cy="806" rx="53" ry="34" fill="#0a0e2a"/><ellipse cx="1407" cy="752" rx="28" ry="32" fill="#090c24" stroke="#2a5a96" stroke-opacity=".3" stroke-width="2.5"/><ellipse cx="1407" cy="811" rx="56" ry="37" fill="#090c24"/><ellipse cx="1476" cy="749" rx="27" ry="30" fill="#0a0e2a" stroke="#2a5a96" stroke-opacity=".3" stroke-width="2.5"/><ellipse cx="1476" cy="805" rx="54" ry="35" fill="#0a0e2a"/><ellipse cx="1517" cy="726" rx="29" ry="32" fill="#090c24" stroke="#2a5a96" stroke-opacity=".3" stroke-width="2.5"/><ellipse cx="1517" cy="786" rx="57" ry="37" fill="#090c24"/><ellipse cx="1565" cy="719" rx="30" ry="34" fill="#0c1232" stroke="#2a5a96" stroke-opacity=".3" stroke-width="2.5"/><ellipse cx="1565" cy="782" rx="60" ry="39" fill="#0c1232"/><ellipse cx="1640" cy="737" rx="28" ry="31" fill="#0b102e" stroke="#2a5a96" stroke-opacity=".3" stroke-width="2.5"/><ellipse cx="1640" cy="795" rx="55" ry="36" fill="#0b102e"/><ellipse cx="1692" cy="730" rx="33" ry="37" fill="#0c1232" stroke="#2a5a96" stroke-opacity=".3" stroke-width="2.5"/><ellipse cx="1692" cy="800" rx="67" ry="43" fill="#0c1232"/><ellipse cx="1750" cy="728" rx="32" ry="36" fill="#090c24" stroke="#2a5a96" stroke-opacity=".3" stroke-width="2.5"/><ellipse cx="1750" cy="795" rx="64" ry="42" fill="#090c24"/><ellipse cx="1807" cy="733" rx="27" ry="31" fill="#0c1232" stroke="#2a5a96" stroke-opacity=".3" stroke-width="2.5"/><ellipse cx="1807" cy="790" rx="55" ry="36" fill="#0c1232"/><ellipse cx="1869" cy="735" rx="30" ry="33" fill="#090c24" stroke="#2a5a96" stroke-opacity=".3" stroke-width="2.5"/><ellipse cx="1869" cy="798" rx="59" ry="39" fill="#090c24"/><ellipse cx="1926" cy="706" rx="32" ry="36" fill="#0a0e2a" stroke="#2a5a96" stroke-opacity=".3" stroke-width="2.5"/><ellipse cx="1926" cy="773" rx="64" ry="42" fill="#0a0e2a"/><ellipse cx="1979" cy="706" rx="31" ry="35" fill="#0b102e" stroke="#2a5a96" stroke-opacity=".3" stroke-width="2.5"/><ellipse cx="1979" cy="771" rx="62" ry="40" fill="#0b102e"/><ellipse cx="45" cy="782" rx="40" ry="45" fill="#090c24" stroke="#2a5a96" stroke-opacity=".3" stroke-width="2.5"/><ellipse cx="45" cy="867" rx="81" ry="53" fill="#090c24"/><ellipse cx="111" cy="790" rx="42" ry="47" fill="#0b102e" stroke="#2a5a96" stroke-opacity=".3" stroke-width="2.5"/><ellipse cx="111" cy="878" rx="83" ry="54" fill="#0b102e"/><ellipse cx="185" cy="787" rx="40" ry="44" fill="#0c1232" stroke="#2a5a96" stroke-opacity=".3" stroke-width="2.5"/><ellipse cx="185" cy="870" rx="79" ry="52" fill="#0c1232"/><ellipse cx="250" cy="775" rx="34" ry="39" fill="#0a0e2a" stroke="#2a5a96" stroke-opacity=".3" stroke-width="2.5"/><ellipse cx="250" cy="847" rx="69" ry="45" fill="#0a0e2a"/><ellipse cx="327" cy="800" rx="40" ry="45" fill="#090c24" stroke="#2a5a96" stroke-opacity=".3" stroke-width="2.5"/><ellipse cx="327" cy="885" rx="81" ry="52" fill="#090c24"/><ellipse cx="392" cy="789" rx="36" ry="40" fill="#0a0e2a" stroke="#2a5a96" stroke-opacity=".3" stroke-width="2.5"/><ellipse cx="392" cy="863" rx="71" ry="46" fill="#0a0e2a"/><ellipse cx="453" cy="793" rx="37" ry="41" fill="#0b102e" stroke="#2a5a96" stroke-opacity=".3" stroke-width="2.5"/><ellipse cx="453" cy="870" rx="73" ry="48" fill="#0b102e"/><ellipse cx="537" cy="785" rx="35" ry="39" fill="#090c24" stroke="#2a5a96" stroke-opacity=".3" stroke-width="2.5"/><ellipse cx="537" cy="859" rx="70" ry="46" fill="#090c24"/><ellipse cx="612" cy="787" rx="39" ry="44" fill="#090c24" stroke="#2a5a96" stroke-opacity=".3" stroke-width="2.5"/><ellipse cx="612" cy="870" rx="78" ry="51" fill="#090c24"/><ellipse cx="695" cy="814" rx="40" ry="44" fill="#0b102e" stroke="#2a5a96" stroke-opacity=".3" stroke-width="2.5"/><ellipse cx="695" cy="897" rx="79" ry="52" fill="#0b102e"/><ellipse cx="792" cy="788" rx="40" ry="45" fill="#0c1232" stroke="#2a5a96" stroke-opacity=".3" stroke-width="2.5"/><ellipse cx="792" cy="872" rx="81" ry="52" fill="#0c1232"/><ellipse cx="869" cy="795" rx="37" ry="41" fill="#0a0e2a" stroke="#2a5a96" stroke-opacity=".3" stroke-width="2.5"/><ellipse cx="869" cy="872" rx="73" ry="48" fill="#0a0e2a"/><ellipse cx="926" cy="807" rx="41" ry="46" fill="#0c1232" stroke="#2a5a96" stroke-opacity=".3" stroke-width="2.5"/><ellipse cx="926" cy="893" rx="82" ry="53" fill="#0c1232"/><ellipse cx="991" cy="818" rx="36" ry="41" fill="#0c1232" stroke="#2a5a96" stroke-opacity=".3" stroke-width="2.5"/><ellipse cx="991" cy="894" rx="73" ry="47" fill="#0c1232"/><ellipse cx="1070" cy="794" rx="41" ry="46" fill="#0c1232" stroke="#2a5a96" stroke-opacity=".3" stroke-width="2.5"/><ellipse cx="1070" cy="880" rx="82" ry="53" fill="#0c1232"/><ellipse cx="1166" cy="801" rx="41" ry="46" fill="#0b102e" stroke="#2a5a96" stroke-opacity=".3" stroke-width="2.5"/><ellipse cx="1166" cy="888" rx="82" ry="54" fill="#0b102e"/><ellipse cx="1224" cy="785" rx="38" ry="43" fill="#0c1232" stroke="#2a5a96" stroke-opacity=".3" stroke-width="2.5"/><ellipse cx="1224" cy="866" rx="77" ry="50" fill="#0c1232"/><ellipse cx="1287" cy="787" rx="42" ry="47" fill="#0b102e" stroke="#2a5a96" stroke-opacity=".3" stroke-width="2.5"/><ellipse cx="1287" cy="875" rx="84" ry="54" fill="#0b102e"/><ellipse cx="1349" cy="813" rx="37" ry="42" fill="#0b102e" stroke="#2a5a96" stroke-opacity=".3" stroke-width="2.5"/><ellipse cx="1349" cy="891" rx="75" ry="49" fill="#0b102e"/><ellipse cx="1410" cy="797" rx="38" ry="43" fill="#0b102e" stroke="#2a5a96" stroke-opacity=".3" stroke-width="2.5"/><ellipse cx="1410" cy="878" rx="76" ry="50" fill="#0b102e"/><ellipse cx="1465" cy="781" rx="40" ry="44" fill="#0b102e" stroke="#2a5a96" stroke-opacity=".3" stroke-width="2.5"/><ellipse cx="1465" cy="864" rx="79" ry="52" fill="#0b102e"/><ellipse cx="1533" cy="809" rx="37" ry="42" fill="#0b102e" stroke="#2a5a96" stroke-opacity=".3" stroke-width="2.5"/><ellipse cx="1533" cy="887" rx="74" ry="48" fill="#0b102e"/><ellipse cx="1606" cy="785" rx="37" ry="41" fill="#0a0e2a" stroke="#2a5a96" stroke-opacity=".3" stroke-width="2.5"/><ellipse cx="1606" cy="862" rx="74" ry="48" fill="#0a0e2a"/><ellipse cx="1673" cy="781" rx="36" ry="40" fill="#0b102e" stroke="#2a5a96" stroke-opacity=".3" stroke-width="2.5"/><ellipse cx="1673" cy="856" rx="71" ry="46" fill="#0b102e"/><ellipse cx="1758" cy="775" rx="38" ry="42" fill="#0a0e2a" stroke="#2a5a96" stroke-opacity=".3" stroke-width="2.5"/><ellipse cx="1758" cy="854" rx="75" ry="49" fill="#0a0e2a"/><ellipse cx="1813" cy="774" rx="42" ry="47" fill="#0b102e" stroke="#2a5a96" stroke-opacity=".3" stroke-width="2.5"/><ellipse cx="1813" cy="862" rx="84" ry="54" fill="#0b102e"/><ellipse cx="1879" cy="792" rx="42" ry="48" fill="#090c24" stroke="#2a5a96" stroke-opacity=".3" stroke-width="2.5"/><ellipse cx="1879" cy="882" rx="85" ry="55" fill="#090c24"/><ellipse cx="1957" cy="784" rx="35" ry="39" fill="#0b102e" stroke="#2a5a96" stroke-opacity=".3" stroke-width="2.5"/><ellipse cx="1957" cy="856" rx="69" ry="45" fill="#0b102e"/><ellipse cx="-28" cy="851" rx="48" ry="54" fill="#090c24" stroke="#2a5a96" stroke-opacity=".3" stroke-width="2.5"/><ellipse cx="-28" cy="952" rx="96" ry="62" fill="#090c24"/><ellipse cx="68" cy="862" rx="46" ry="52" fill="#0b102e" stroke="#2a5a96" stroke-opacity=".3" stroke-width="2.5"/><ellipse cx="68" cy="959" rx="93" ry="60" fill="#0b102e"/><ellipse cx="149" cy="857" rx="47" ry="52" fill="#0a0e2a" stroke="#2a5a96" stroke-opacity=".3" stroke-width="2.5"/><ellipse cx="149" cy="954" rx="93" ry="60" fill="#0a0e2a"/><ellipse cx="276" cy="841" rx="54" ry="60" fill="#090c24" stroke="#2a5a96" stroke-opacity=".3" stroke-width="2.5"/><ellipse cx="276" cy="954" rx="108" ry="70" fill="#090c24"/><ellipse cx="346" cy="865" rx="47" ry="53" fill="#0a0e2a" stroke="#2a5a96" stroke-opacity=".3" stroke-width="2.5"/><ellipse cx="346" cy="963" rx="94" ry="61" fill="#0a0e2a"/><ellipse cx="471" cy="869" rx="46" ry="51" fill="#0a0e2a" stroke="#2a5a96" stroke-opacity=".3" stroke-width="2.5"/><ellipse cx="471" cy="965" rx="91" ry="59" fill="#0a0e2a"/><ellipse cx="579" cy="880" rx="44" ry="50" fill="#0a0e2a" stroke="#2a5a96" stroke-opacity=".3" stroke-width="2.5"/><ellipse cx="579" cy="973" rx="89" ry="58" fill="#0a0e2a"/><ellipse cx="666" cy="878" rx="49" ry="55" fill="#0a0e2a" stroke="#2a5a96" stroke-opacity=".3" stroke-width="2.5"/><ellipse cx="666" cy="982" rx="98" ry="64" fill="#0a0e2a"/><ellipse cx="767" cy="856" rx="53" ry="59" fill="#0a0e2a" stroke="#2a5a96" stroke-opacity=".3" stroke-width="2.5"/><ellipse cx="767" cy="967" rx="106" ry="69" fill="#0a0e2a"/><ellipse cx="872" cy="882" rx="46" ry="52" fill="#0b102e" stroke="#2a5a96" stroke-opacity=".3" stroke-width="2.5"/><ellipse cx="872" cy="979" rx="92" ry="60" fill="#0b102e"/><ellipse cx="986" cy="877" rx="53" ry="59" fill="#0a0e2a" stroke="#2a5a96" stroke-opacity=".3" stroke-width="2.5"/><ellipse cx="986" cy="988" rx="106" ry="69" fill="#0a0e2a"/><ellipse cx="1112" cy="878" rx="56" ry="62" fill="#0c1232" stroke="#2a5a96" stroke-opacity=".3" stroke-width="2.5"/><ellipse cx="1112" cy="995" rx="111" ry="72" fill="#0c1232"/><ellipse cx="1202" cy="887" rx="44" ry="49" fill="#090c24" stroke="#2a5a96" stroke-opacity=".3" stroke-width="2.5"/><ellipse cx="1202" cy="979" rx="88" ry="57" fill="#090c24"/><ellipse cx="1274" cy="872" rx="45" ry="50" fill="#0b102e" stroke="#2a5a96" stroke-opacity=".3" stroke-width="2.5"/><ellipse cx="1274" cy="966" rx="89" ry="58" fill="#0b102e"/><ellipse cx="1401" cy="857" rx="50" ry="56" fill="#0c1232" stroke="#2a5a96" stroke-opacity=".3" stroke-width="2.5"/><ellipse cx="1401" cy="963" rx="100" ry="65" fill="#0c1232"/><ellipse cx="1471" cy="860" rx="46" ry="52" fill="#090c24" stroke="#2a5a96" stroke-opacity=".3" stroke-width="2.5"/><ellipse cx="1471" cy="957" rx="93" ry="60" fill="#090c24"/><ellipse cx="1560" cy="874" rx="48" ry="53" fill="#0c1232" stroke="#2a5a96" stroke-opacity=".3" stroke-width="2.5"/><ellipse cx="1560" cy="974" rx="96" ry="62" fill="#0c1232"/><ellipse cx="1687" cy="847" rx="58" ry="65" fill="#0c1232" stroke="#2a5a96" stroke-opacity=".3" stroke-width="2.5"/><ellipse cx="1687" cy="968" rx="115" ry="75" fill="#0c1232"/><ellipse cx="1797" cy="850" rx="46" ry="52" fill="#0b102e" stroke="#2a5a96" stroke-opacity=".3" stroke-width="2.5"/><ellipse cx="1797" cy="948" rx="93" ry="60" fill="#0b102e"/><ellipse cx="1895" cy="855" rx="48" ry="54" fill="#0c1232" stroke="#2a5a96" stroke-opacity=".3" stroke-width="2.5"/><ellipse cx="1895" cy="957" rx="97" ry="63" fill="#0c1232"/><ellipse cx="1976" cy="850" rx="55" ry="62" fill="#0b102e" stroke="#2a5a96" stroke-opacity=".3" stroke-width="2.5"/><ellipse cx="1976" cy="966" rx="110" ry="72" fill="#0b102e"/><ellipse cx="-21" cy="937" rx="58" ry="65" fill="#0b102e" stroke="#2a5a96" stroke-opacity=".3" stroke-width="2.5"/><ellipse cx="-21" cy="1059" rx="116" ry="76" fill="#0b102e"/><ellipse cx="138" cy="941" rx="60" ry="68" fill="#090c24" stroke="#2a5a96" stroke-opacity=".3" stroke-width="2.5"/><ellipse cx="138" cy="1068" rx="121" ry="78" fill="#090c24"/><ellipse cx="281" cy="931" rx="72" ry="80" fill="#090c24" stroke="#2a5a96" stroke-opacity=".3" stroke-width="2.5"/><ellipse cx="281" cy="1081" rx="143" ry="93" fill="#090c24"/><ellipse cx="383" cy="953" rx="57" ry="64" fill="#0b102e" stroke="#2a5a96" stroke-opacity=".3" stroke-width="2.5"/><ellipse cx="383" cy="1073" rx="114" ry="74" fill="#0b102e"/><ellipse cx="496" cy="940" rx="69" ry="77" fill="#0c1232" stroke="#2a5a96" stroke-opacity=".3" stroke-width="2.5"/><ellipse cx="496" cy="1084" rx="137" ry="89" fill="#0c1232"/><ellipse cx="631" cy="952" rx="61" ry="68" fill="#0c1232" stroke="#2a5a96" stroke-opacity=".3" stroke-width="2.5"/><ellipse cx="631" cy="1080" rx="122" ry="79" fill="#0c1232"/><ellipse cx="761" cy="947" rx="73" ry="82" fill="#0b102e" stroke="#2a5a96" stroke-opacity=".3" stroke-width="2.5"/><ellipse cx="761" cy="1100" rx="146" ry="95" fill="#0b102e"/><ellipse cx="906" cy="947" rx="57" ry="64" fill="#0c1232" stroke="#2a5a96" stroke-opacity=".3" stroke-width="2.5"/><ellipse cx="906" cy="1067" rx="114" ry="74" fill="#0c1232"/><ellipse cx="1045" cy="969" rx="57" ry="64" fill="#0b102e" stroke="#2a5a96" stroke-opacity=".3" stroke-width="2.5"/><ellipse cx="1045" cy="1090" rx="115" ry="75" fill="#0b102e"/><ellipse cx="1198" cy="963" rx="60" ry="67" fill="#0b102e" stroke="#2a5a96" stroke-opacity=".3" stroke-width="2.5"/><ellipse cx="1198" cy="1089" rx="120" ry="78" fill="#0b102e"/><ellipse cx="1333" cy="954" rx="74" ry="82" fill="#0c1232" stroke="#2a5a96" stroke-opacity=".3" stroke-width="2.5"/><ellipse cx="1333" cy="1109" rx="147" ry="96" fill="#0c1232"/><ellipse cx="1447" cy="944" rx="72" ry="80" fill="#090c24" stroke="#2a5a96" stroke-opacity=".3" stroke-width="2.5"/><ellipse cx="1447" cy="1095" rx="144" ry="93" fill="#090c24"/><ellipse cx="1602" cy="943" rx="63" ry="70" fill="#0a0e2a" stroke="#2a5a96" stroke-opacity=".3" stroke-width="2.5"/><ellipse cx="1602" cy="1075" rx="125" ry="81" fill="#0a0e2a"/><ellipse cx="1751" cy="930" rx="70" ry="78" fill="#0a0e2a" stroke="#2a5a96" stroke-opacity=".3" stroke-width="2.5"/><ellipse cx="1751" cy="1076" rx="139" ry="91" fill="#0a0e2a"/><ellipse cx="1887" cy="930" rx="74" ry="83" fill="#0c1232" stroke="#2a5a96" stroke-opacity=".3" stroke-width="2.5"/><ellipse cx="1887" cy="1085" rx="148" ry="96" fill="#0c1232"/><ellipse cx="2015" cy="932" rx="68" ry="76" fill="#0a0e2a" stroke="#2a5a96" stroke-opacity=".3" stroke-width="2.5"/><ellipse cx="2015" cy="1075" rx="136" ry="88" fill="#0a0e2a"/><ellipse cx="28" cy="1040" rx="76" ry="85" fill="#0c1232" stroke="#2a5a96" stroke-opacity=".3" stroke-width="2.5"/><ellipse cx="28" cy="1198" rx="151" ry="98" fill="#0c1232"/><ellipse cx="164" cy="1029" rx="88" ry="98" fill="#0a0e2a" stroke="#2a5a96" stroke-opacity=".3" stroke-width="2.5"/><ellipse cx="164" cy="1213" rx="175" ry="114" fill="#0a0e2a"/><ellipse cx="340" cy="1063" rx="75" ry="84" fill="#0c1232" stroke="#2a5a96" stroke-opacity=".3" stroke-width="2.5"/><ellipse cx="340" cy="1221" rx="150" ry="98" fill="#0c1232"/><ellipse cx="521" cy="1045" rx="79" ry="89" fill="#0c1232" stroke="#2a5a96" stroke-opacity=".3" stroke-width="2.5"/><ellipse cx="521" cy="1211" rx="158" ry="103" fill="#0c1232"/><ellipse cx="647" cy="1076" rx="76" ry="85" fill="#090c24" stroke="#2a5a96" stroke-opacity=".3" stroke-width="2.5"/><ellipse cx="647" cy="1236" rx="152" ry="99" fill="#090c24"/><ellipse cx="827" cy="1048" rx="72" ry="81" fill="#0a0e2a" stroke="#2a5a96" stroke-opacity=".3" stroke-width="2.5"/><ellipse cx="827" cy="1200" rx="145" ry="94" fill="#0a0e2a"/><ellipse cx="984" cy="1066" rx="81" ry="91" fill="#0c1232" stroke="#2a5a96" stroke-opacity=".3" stroke-width="2.5"/><ellipse cx="984" cy="1236" rx="162" ry="105" fill="#0c1232"/><ellipse cx="1168" cy="1051" rx="89" ry="99" fill="#0b102e" stroke="#2a5a96" stroke-opacity=".3" stroke-width="2.5"/><ellipse cx="1168" cy="1238" rx="178" ry="115" fill="#0b102e"/><ellipse cx="1362" cy="1059" rx="81" ry="91" fill="#0a0e2a" stroke="#2a5a96" stroke-opacity=".3" stroke-width="2.5"/><ellipse cx="1362" cy="1229" rx="162" ry="106" fill="#0a0e2a"/><ellipse cx="1482" cy="1046" rx="77" ry="86" fill="#0c1232" stroke="#2a5a96" stroke-opacity=".3" stroke-width="2.5"/><ellipse cx="1482" cy="1208" rx="154" ry="100" fill="#0c1232"/><ellipse cx="1614" cy="1044" rx="83" ry="93" fill="#0a0e2a" stroke="#2a5a96" stroke-opacity=".3" stroke-width="2.5"/><ellipse cx="1614" cy="1218" rx="166" ry="108" fill="#0a0e2a"/><ellipse cx="1745" cy="1032" rx="74" ry="83" fill="#0a0e2a" stroke="#2a5a96" stroke-opacity=".3" stroke-width="2.5"/><ellipse cx="1745" cy="1188" rx="148" ry="96" fill="#0a0e2a"/><ellipse cx="1935" cy="1035" rx="81" ry="90" fill="#0b102e" stroke="#2a5a96" stroke-opacity=".3" stroke-width="2.5"/><ellipse cx="1935" cy="1204" rx="162" ry="105" fill="#0b102e"/><path d="M891 772 L889 641 L901 641 L919 772z" fill="#0b0f2c"/><ellipse cx="895" cy="633" rx="10" ry="13" fill="#0c1030"/><path d="M971 762 L984 626 L996 626 L999 762z" fill="#0b0f2c"/><ellipse cx="990" cy="618" rx="10" ry="13" fill="#0c1030"/><path d="M1036 772 L1034 648 L1046 648 L1064 772z" fill="#0b0f2c"/><ellipse cx="1040" cy="640" rx="10" ry="13" fill="#0c1030"/><path d="M1114 762 L1114 608 L1126 608 L1142 762z" fill="#0b0f2c"/><ellipse cx="1120" cy="600" rx="10" ry="13" fill="#0c1030"/><path d="M1151 772 L1179 632 L1191 632 L1179 772z" fill="#0b0f2c"/><ellipse cx="1185" cy="624" rx="10" ry="13" fill="#0c1030"/><path d="M1261 762 L1284 626 L1296 626 L1289 762z" fill="#0b0f2c"/><ellipse cx="1290" cy="618" rx="10" ry="13" fill="#0c1030"/><path d="M1321 762 L1334 592 L1346 592 L1349 762z" fill="#0b0f2c"/><ellipse cx="1340" cy="584" rx="10" ry="13" fill="#0c1030"/><path d="M1346 772 L1389 638 L1401 638 L1374 772z" fill="#0b0f2c"/><ellipse cx="1395" cy="630" rx="10" ry="13" fill="#0c1030"/><path d="M1426 772 L1444 626 L1456 626 L1454 772z" fill="#0b0f2c"/><ellipse cx="1450" cy="618" rx="10" ry="13" fill="#0c1030"/><path d="M786 772 L784 656 L796 656 L814 772z" fill="#0b0f2c"/><ellipse cx="790" cy="648" rx="10" ry="13" fill="#0c1030"/><path d="M1486 772 L1514 646 L1526 646 L1514 772z" fill="#0b0f2c"/><ellipse cx="1520" cy="638" rx="10" ry="13" fill="#0c1030"/><path d="M726 777 L719 666 L731 666 L754 777z" fill="#0b0f2c"/><ellipse cx="725" cy="658" rx="10" ry="13" fill="#0c1030"/><path d="M846 777 L844 676 L856 676 L874 777z" fill="#0b0f2c"/><ellipse cx="850" cy="668" rx="10" ry="13" fill="#0c1030"/><path d="M1216 772 L1234 662 L1246 662 L1244 772z" fill="#0b0f2c"/><ellipse cx="1240" cy="654" rx="10" ry="13" fill="#0c1030"/><path d="M1076 777 L1074 676 L1086 676 L1104 777z" fill="#0b0f2c"/><ellipse cx="1080" cy="668" rx="10" ry="13" fill="#0c1030"/><path d="M1546 777 L1564 676 L1576 676 L1574 777z" fill="#0b0f2c"/><ellipse cx="1570" cy="668" rx="10" ry="13" fill="#0c1030"/></g>
<rect y="660" width="1995" height="471" fill="url(#crowdfade)"/>
<rect width="1995" height="1131" fill="url(#vig)"/>
</symbol></svg>
<div id="win">
<div class="abs" style="left:516px;top:299px;width:83px;height:82px;border-radius:24px;background:#edf2fc"></div>
<svg class="abs" style="left:537px;top:320px" width="41" height="41" viewBox="0 0 41 41"><path d="M9.5 15.5 L20.5 26.5 L31.5 15.5" fill="none" stroke="#303030" stroke-width="5"/></svg>
<div class="chip" style="left:617px;width:106px;background:#a142f4">音樂</div><div class="uline" style="left:623px;width:94px;background:#a142f4"></div>
<div class="chip" style="left:753px;width:106px;background:#f9ab00;color:#202124">學校</div><div class="uline" style="left:759px;width:94px;background:#f9ab00"></div>
<div class="chip" style="left:888px;width:107px;background:#1a73e8">社交</div><div class="uline" style="left:894.5px;width:94px;background:#1a73e8"></div>
<svg class="abs" style="left:1000px;top:299px" width="730" height="101" viewBox="1000 299 730 101"><path d="M1008 400 A28 28 0 0 0 1036 372 V323 A24 24 0 0 1 1060 299 H1660 A24 24 0 0 1 1684 323 V372 A28 28 0 0 0 1712 400 Z" fill="#fff"/></svg>
<svg class="abs" style="left:1062.5px;top:325px" width="42" height="29.5" viewBox="0 0 42 29.5"><rect width="42" height="29.5" rx="8" fill="#f00"/><path d="M16.5 8.2 L27.5 14.75 L16.5 21.3z" fill="#fff"/></svg>
<div class="abs" style="left:1126px;top:320px;font-size:35px;line-height:40px;letter-spacing:.45px;color:#1f1f1f;-webkit-text-stroke:.5px #1f1f1f">YouTube</div>
<svg class="abs" style="left:1622px;top:324px" width="32" height="32" viewBox="0 0 32 32"><path d="M5 5 L27 27 M27 5 L5 27" stroke="#303030" stroke-width="4.6" fill="none"/></svg>
<svg class="abs" style="left:1733px;top:325px" width="32" height="32" viewBox="0 0 32 32"><path d="M16 3 V29 M3 16 H29" stroke="#303030" stroke-width="4.6" fill="none"/></svg>
<svg class="abs" style="left:3020px;top:315px" width="290" height="50" viewBox="3020 315 290 50"><g stroke="#1473ff" stroke-width="6.2" fill="none"><path d="M3028 340 H3064"/><rect x="3151" y="324" width="31" height="31"/><path d="M3267 325 L3297 355 M3297 325 L3267 355"/></g></svg>
<div id="toolbar"></div><div id="tsep"></div>
<svg class="abs" style="left:520px;top:420px" width="260" height="72" viewBox="520 420 260 72"><g fill="none" stroke-width="3.4" stroke-linejoin="miter"><path d="M569 455.7 H539.5 M553.5 440.5 L538.3 455.7 L553.5 471" stroke="#474747"/><path d="M625 455.7 H654.5 M640.5 440.5 L655.7 455.7 L640.5 471" stroke="#a8abb0"/><path d="M744.3 451 A15 15 0 1 0 744.6 459.5 M745.3 439.5 V452.8 H732" stroke="#474747"/></g></svg>
<div id="omni"></div>
<div class="abs" style="left:806px;top:426px;width:60px;height:60px;border-radius:30px;background:#fff"></div>
<svg class="abs" style="left:812px;top:432px" width="48" height="48" viewBox="812 432 48 48"><g fill="none" stroke="#3a3a3a" stroke-width="3.2"><circle cx="826.3" cy="447" r="4.6"/><path d="M835.5 447.6 H849.5"/><path d="M820.5 462 H834"/><circle cx="844.5" cy="462" r="4.6"/></g></svg>
<div class="abs" style="left:885px;top:435px;font-size:36px;line-height:42px;color:#1f1f1f;white-space:nowrap">youtube.com<span style="color:#5f6368">/watch/</span></div>
<svg class="abs" style="left:2918px;top:435px" width="44" height="44" viewBox="0 0 24 24"><path d="M12 3.6 L14.45 9.4 L20.7 9.95 L15.95 14.05 L17.4 20.2 L12 16.9 L6.6 20.2 L8.05 14.05 L3.3 9.95 L9.55 9.4 Z" fill="none" stroke="#474747" stroke-width="1.75" stroke-linejoin="miter"/></svg>
<svg class="abs" style="left:3034px;top:430px" width="50" height="48" viewBox="3034 430 50 48"><path d="M3040.5 440 H3053 A5.2 5.2 0 0 1 3063.4 440 H3073 V450 A5.2 5.2 0 0 1 3073 460.4 V472 H3040.5 V461.5 A5.6 5.6 0 0 0 3040.5 450.3 Z" fill="none" stroke="#474747" stroke-width="3.4" stroke-linejoin="round"/></svg>
<svg class="abs" style="left:3255.4px;top:432px" width="50" height="50" viewBox="0 0 50 50"><defs><clipPath id="avc"><circle cx="25" cy="25" r="25"/></clipPath><filter id="avb" x="-20%" y="-20%" width="140%" height="140%"><feGaussianBlur stdDeviation="1.1"/></filter></defs><g clip-path="url(#avc)"><rect width="50" height="50" fill="#ececf0"/><g filter="url(#avb)"><ellipse cx="9" cy="26" rx="6" ry="14" fill="#c4c5ca"/><ellipse cx="42" cy="27" rx="6" ry="13" fill="#cfd0d4"/><rect x="0" y="30" width="14" height="8" fill="#b4b5ba"/><rect x="37" y="30" width="13" height="8" fill="#bcbdc2"/><ellipse cx="24.7" cy="11.5" rx="11.3" ry="10.5" fill="#2b2624"/><ellipse cx="24.6" cy="21" rx="8.6" ry="12" fill="#9c5a44"/><path d="M19.5 30 L29.5 30 L27.5 49 L21.5 49z" fill="#8a4c3a"/><path d="M-2 52 L3 40 Q12 35 20 32.5 L23.5 50 L26 50 L29.5 32.5 Q38 35 47 40 L52 52z" fill="#f4f5f6"/><ellipse cx="24.6" cy="27.6" rx="3.2" ry="1.3" fill="#e8d8d4"/><ellipse cx="20.5" cy="18.6" rx="1.6" ry="1" fill="#3a221c"/><ellipse cx="28.7" cy="18.6" rx="1.6" ry="1" fill="#3a221c"/></g></g></svg>
<div id="page"></div>
<svg class="abs" style="left:545px;top:544px" width="31" height="26" viewBox="0 0 31 26"><path d="M0 2.5 H31 M0 13 H31 M0 23.5 H31" stroke="#0f0f0f" stroke-width="2.2"/></svg>
<svg class="abs" style="left:622px;top:541px" width="49" height="34" viewBox="0 0 49 34"><rect width="49" height="34" rx="9" fill="#f00"/><path d="M19.5 9.5 L32 17 L19.5 24.5z" fill="#fff"/></svg>
<div class="abs" style="left:675.6px;top:535px;font-size:40.5px;line-height:46px;font-weight:700;color:#212121;-webkit-text-stroke:1.2px #212121;transform-origin:0 0;transform:scaleX(.607);white-space:nowrap;letter-spacing:-.3px">YouTube</div>
<div class="abs" style="left:1431px;top:524px;width:1023px;height:68px;border-radius:34px;border:2px solid #d3d3d3;background:#fff;overflow:hidden"><div class="abs" style="left:913px;top:0;width:110px;height:64px;background:#f6f6f6;border-left:2px solid #d3d3d3"></div></div>
<div class="abs" style="left:1458.5px;top:538px;font-size:28.5px;line-height:40px;color:#888">搜尋</div>
<svg class="abs" style="left:2380px;top:539px" width="38" height="38" viewBox="0 0 38 38"><circle cx="17.5" cy="17.5" r="12.5" fill="none" stroke="#0f0f0f" stroke-width="2.4"/><path d="M26.5 26.5 L34 34" stroke="#0f0f0f" stroke-width="2.4"/></svg>
<div class="abs" style="left:2482.2px;top:522.6px;width:68.8px;height:68.8px;border-radius:35px;background:#f0f0f0"></div>
<div class="abs" style="left:2510.5px;top:543px;width:11px;height:26px;border-radius:6px;background:#0f0f0f"></div>
<svg class="abs" style="left:2500px;top:548px" width="34" height="40" viewBox="0 0 34 40"><path d="M6.5 12 V14 A9.5 9.5 0 0 0 25.5 14 V12 M16 23.5 V32" fill="none" stroke="#0f0f0f" stroke-width="2.2"/></svg>
<div id="video"><svg width="1995" height="1131" viewBox="0 0 1995 1131" style="display:block"><use href="#concert" width="1995" height="1131"/></svg></div>
<div class="abs" style="left:618.5px;top:1789px;font-size:40px;line-height:50px;color:#0f0f0f;white-space:nowrap;letter-spacing:.3px;word-spacing:1px">現場演唱會 - 棕櫚泉</div>
<div class="sk" style="left:2648px;top:884px;width:287px;height:162px"></div>
<div class="sk" style="left:2648px;top:1063px;width:287px;height:165.5px"></div>
<div class="sk" style="left:2648px;top:1242px;width:287px;height:166px"></div>
<div class="sk" style="left:2648px;top:1422px;width:287px;height:170px"></div>
<div class="sk" style="left:2648px;top:1600.5px;width:287px;height:165.5px"></div>
<div class="sk" style="left:2648px;top:1777px;width:287px;height:123px"></div>
<div class="sl" style="top:1066px;height:33.5px;width:288px"></div>
<div class="sl" style="top:1103px;height:33.5px;width:343px"></div>
<div class="sl" style="top:1141.5px;height:25.5px;width:153px"></div>
<div class="sl" style="top:1172px;height:26px;width:229.5px"></div>
<div class="sl" style="top:1242px;height:33px;width:288px"></div>
<div class="sl" style="top:1279px;height:33.5px;width:343px"></div>
<div class="sl" style="top:1320.5px;height:26px;width:152.5px"></div>
<div class="sl" style="top:1354.5px;height:26px;width:252px"></div>
<div class="sl" style="top:1432px;height:32.5px;width:287.5px"></div>
<div class="sl" style="top:1469px;height:26.5px;width:208.5px"></div>
<div class="sl" style="top:1606px;height:32.5px;width:356px"></div>
<div class="sl" style="top:1643.5px;height:32.5px;width:307.5px"></div>
<div class="sl" style="top:1683px;height:25.5px;width:152px"></div>
<div class="sl" style="top:1713.5px;height:25.5px;width:334.5px"></div>
<div class="sl" style="top:1776.5px;height:32.5px;width:334.5px"></div>
<div class="sl" style="top:1814px;height:32.5px;width:307.5px"></div>
<div class="sl" style="top:1853px;height:26px;width:152px"></div>
<div id="scrim"></div>
</div>
<div id="top">
<div id="cast"></div>
<svg class="abs" style="left:717.7px;top:1634.9px" width="54.5" height="54.5" viewBox="0 0 24 24"><path fill="#fff" d="M21 3H3c-1.1 0-2 .9-2 2v3h2V5h18v14h-7v2h7c1.1 0 2-.9 2-2V5c0-1.1-.9-2-2-2zM1 18v3h3c0-1.66-1.34-3-3-3zm0-4v2c2.76 0 5 2.24 5 5h2c0-3.87-3.13-7-7-7zm0-4v2c4.97 0 9 4.03 9 9h2c0-6.08-4.93-11-11-11z"/></svg>
<div class="abs" style="left:805px;top:1637px;font-size:36px;line-height:50px;color:#fff;white-space:nowrap;letter-spacing:.35px">在客廳電視播放</div>
<div id="mbtn"></div>
<svg class="abs" style="left:3137.5px;top:425px" width="68" height="68" viewBox="0 0 24 24"><path fill="#000" d="M15 6H3v2h12V6zm0 4H3v2h12v-2zM3 16h8v-2H3v2zM17 6v8.18c-.31-.11-.65-.18-1-.18-1.66 0-3 1.340-3 3s1.340 3 3 3 3-1.340 3-3V8h3V6h-5z"/></svg>
<div id="pop"><div id="popin">
<div id="dark"></div>
<svg class="abs" style="left:422px;top:0" width="379" height="265" viewBox="315 74 1329 929" preserveAspectRatio="none"><use href="#concert" width="1995" height="1131"/></svg>
<div class="abs" style="left:422px;top:0;width:60px;height:265px;background:linear-gradient(90deg,#050711 0,#050711 18%,rgba(5,7,17,0) 100%)"></div>
<div class="pill" style="left:40.5px;top:39px;width:57px;height:16px"></div>
<div class="pill" style="left:40.5px;top:88px;width:257px;height:16px"></div>
<div class="pill" style="left:40.5px;top:115.5px;width:134px;height:17px"></div>
<svg class="abs" style="left:0;top:160px" width="420" height="90" viewBox="2508 717 420 90"><g fill="#cdd2f8" stroke="#cdd2f8" stroke-width="2.4" stroke-linejoin="round"><path d="M2558 760.5 L2573 750.6 V770.4z"/><path d="M2578.2 760.5 L2593.3 750.6 V770.4z"/><path d="M2646.4 748.4 L2668.6 760.7 L2646.4 773.4z"/><path d="M2716.8 750.6 L2731.8 760.5 L2716.8 770.4z"/><path d="M2737.2 750.6 L2752 760.5 L2737.2 770.4z"/></g><rect x="2783.9" y="735.3" width="4.3" height="50.7" rx="2.1" fill="#cdd2f8"/><g fill="none" stroke="#cdd2f8" stroke-width="3.2"><path d="M2816.9 740.9 L2830 754 M2816 753.6 H2830.4 V739.9" stroke-width="2.8"/><path d="M2835.7 741.4 H2857 Q2859.4 741.4 2859.4 743.8 V760.4"/><path d="M2817.5 759.3 V773.8 H2838"/></g><rect x="2841.6" y="763.3" width="19.4" height="12.1" fill="#cdd2f8"/></svg>
<svg class="abs" style="left:40px;top:292px" width="60" height="50" viewBox="2548 849 60 50"><rect x="2557.1" y="857.7" width="41.2" height="32.4" rx="3" fill="none" stroke="#000" stroke-width="3.4"/><g fill="#000"><rect x="2564.4" y="871.3" width="3.6" height="2.7"/><rect x="2571.8" y="871.3" width="19.5" height="2.7"/><rect x="2564.4" y="878.6" width="19.9" height="2.7"/><rect x="2587.9" y="878.6" width="3.4" height="2.7"/></g></svg>
<div class="row" style="top:297.5px">即時字幕</div>
<svg class="abs" style="left:700px;top:296px" width="70" height="44" viewBox="3208 853 70 44"><rect x="3217" y="863" width="45" height="23" rx="11.5" fill="none" stroke="#000" stroke-width="4.2"/><circle cx="3228.2" cy="874.5" r="6.8" fill="#000"/></svg>
<div class="abs" style="left:0;top:368.7px;width:801px;height:1.6px;background:#8591bd"></div>
<svg class="abs" style="left:42.7px;top:393.5px" width="54" height="54" viewBox="0 0 24 24"><path fill="#000" fill-rule="evenodd" d="M19.43 12.98c.04-.32.07-.64.07-.98 0-.34-.03-.66-.07-.98l2.11-1.65c.19-.15.24-.42.12-.64l-2-3.46c-.09-.16-.26-.25-.44-.25-.06 0-.12.01-.17.03l-2.49 1c-.52-.4-1.08-.73-1.69-.98l-.38-2.65C14.46 2.18 14.25 2 14 2h-4c-.25 0-.46.18-.49.42l-.38 2.65c-.61.25-1.17.59-1.69.98l-2.49-1c-.06-.02-.12-.03-.18-.03-.17 0-.34.09-.43.25l-2 3.46c-.13.22-.07.49.12.64l2.11 1.65c-.04.32-.07.65-.07.98 0 .33.03.66.07.98l-2.11 1.65c-.19.15-.24.42-.12.64l2 3.46c.09.16.26.25.44.25.06 0 .12-.01.17-.03l2.49-1c.52.4 1.08.73 1.69.98l.38 2.65c.03.24.24.42.49.42h4c.25 0 .46-.18.49-.42l.38-2.65c.61-.25 1.17-.59 1.69-.98l2.49 1c.06.02.12.03.18.03.17 0 .34-.09.43-.25l2-3.46c.12-.22.07-.49-.12-.64l-2.11-1.65zm-1.98-1.71c.04.31.05.52.05.73 0 .21-.02.43-.05.73l-.14 1.13.89.7 1.08.84-.7 1.21-1.27-.51-1.04-.42-.9.68c-.43.32-.84.56-1.25.73l-1.06.43-.16 1.13-.2 1.35h-1.4l-.19-1.35-.16-1.13-1.06-.43c-.43-.18-.83-.41-1.23-.71l-.91-.7-1.06.43-1.27.51-.7-1.21 1.08-.84.89-.7-.14-1.13c-.03-.31-.05-.54-.05-.74s.02-.43.05-.73l.14-1.13-.89-.7-1.08-.84.7-1.21 1.27.51 1.04.42.9-.68c.43-.32.84-.56 1.25-.73l1.06-.43.16-1.13.2-1.35h1.39l.19 1.35.16 1.13 1.06.43c.43.18.83.41 1.23.71l.91.7 1.06-.43 1.27-.51.7 1.21-1.07.85-.89.7.14 1.13z"/><circle cx="12" cy="12" r="3.3" fill="#000"/></svg>
<div class="row" style="top:400.5px">字幕設定</div>
<svg class="abs" style="left:720px;top:395px" width="52" height="52" viewBox="3228 952 52 52"><g fill="none" stroke="#000" stroke-width="3.4"><path d="M3252 959.6 H3238 Q3235.7 959.6 3235.7 962 V993.8 Q3235.7 996.2 3238 996.2 H3270.5 Q3272.9 996.2 3272.9 993.8 V979"/><path d="M3248 984 L3272 960 M3257.5 959.6 H3272.9 V975"/></g></svg>
</div></div>
</div>
</body></html>
